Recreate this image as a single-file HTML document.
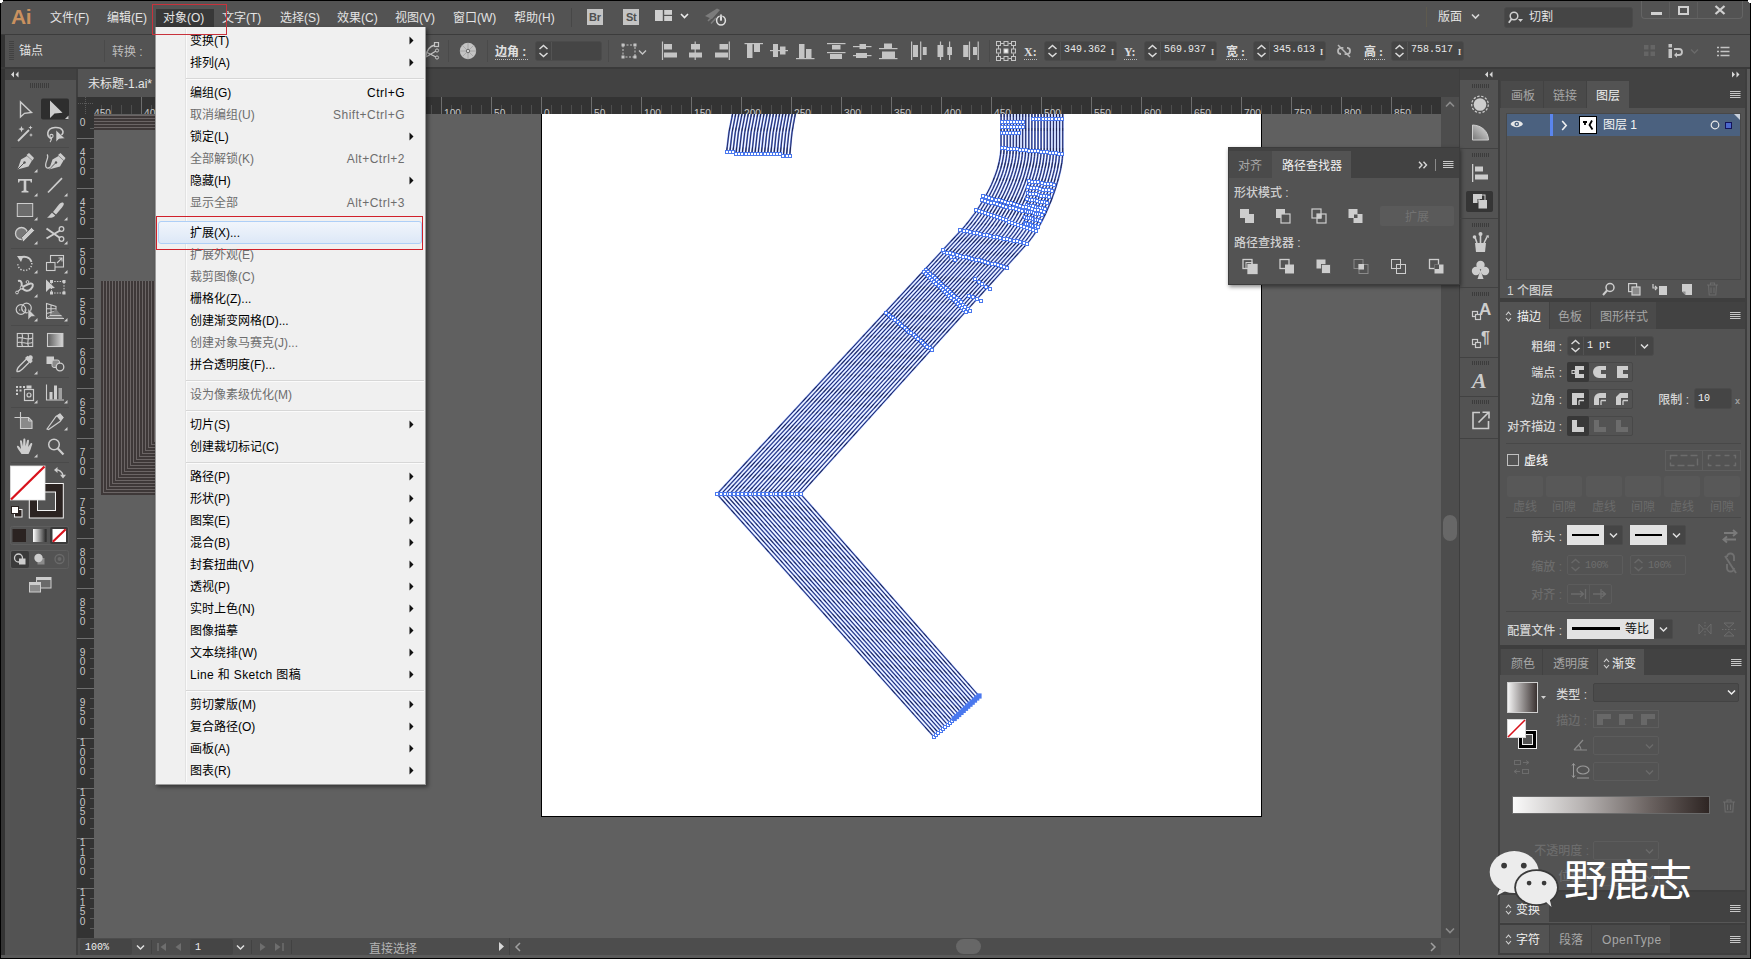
<!DOCTYPE html>
<html lang="zh-CN"><head><meta charset="utf-8"><title>Adobe Illustrator</title>
<style>
html,body{margin:0;padding:0;background:#2b2b2b;}
#root{position:relative;width:1751px;height:959px;overflow:hidden;font-family:"Liberation Sans","Noto Sans CJK SC",sans-serif;}
.a{position:absolute;}
.t{position:absolute;white-space:nowrap;line-height:1;}
.m{font-family:"Liberation Mono","Noto Sans CJK SC",monospace;}
</style></head>
<body><div id="root">
<!-- p_base -->
<div class="a" style="left:0px;top:0px;width:1751px;height:959px;background:#000;"></div>
<div class="a" style="left:1px;top:1px;width:1749px;height:957px;background:#535353;"></div>
<div class="a" style="left:0px;top:0px;width:3px;height:2px;background:#fff;"></div>
<div class="a" style="left:0px;top:0px;width:2px;height:3px;background:#fff;"></div>
<div class="a" style="left:1748px;top:0px;width:3px;height:2px;background:#fff;"></div>
<div class="a" style="left:1749px;top:0px;width:2px;height:3px;background:#fff;"></div>
<div class="a" style="left:1px;top:68px;width:1749px;height:887px;background:#3e3e3e;"></div>
<div class="a" style="left:1px;top:34px;width:4px;height:921px;background:#343434;"></div>
<div class="a" style="left:1747px;top:68px;width:3px;height:890px;background:#5a5a5a;"></div>
<div class="a" style="left:1px;top:955px;width:1749px;height:3px;background:#5a5a5a;"></div>
<div class="a" style="left:1px;top:34px;width:1749px;height:1px;background:#3c3c3c;"></div>
<div class="a" style="left:1px;top:67px;width:1749px;height:2px;background:#3a3a3a;"></div>
<div class="a" style="left:5px;top:69px;width:71px;height:886px;background:#535353;"></div>
<div class="a" style="left:5px;top:69px;width:71px;height:11px;background:#424242;"></div>
<div class="a" style="left:78px;top:69px;width:1381px;height:28px;background:#424242;"></div>
<div class="a" style="left:78px;top:69px;width:120px;height:28px;background:#535353;"></div>
<div class="t" style="left:88px;top:78px;color:#e6e6e6;font-size:12px;">未标题-1.ai*</div>
<div class="a" style="left:78px;top:97px;width:1381px;height:858px;background:#606060;"></div>
<div class="a" style="left:1441px;top:97px;width:18px;height:841px;background:#4d4d4d;"></div>
<div class="a" style="left:78px;top:938px;width:1381px;height:17px;background:#4d4d4d;"></div>
<div class="a" style="left:541px;top:113px;width:721px;height:704px;background:#fff;border:1px solid #000;box-sizing:border-box;border-top:none;"></div>
<div class="a" style="left:1460px;top:69px;width:38px;height:886px;background:#535353;"></div>
<div class="a" style="left:1460px;top:69px;width:285px;height:11px;background:#424242;"></div>
<div class="a" style="left:1500px;top:69px;width:245px;height:886px;background:#535353;"></div>
<div class="a" style="left:1500px;top:69px;width:245px;height:11px;background:#424242;"></div>
<!-- p_menubar -->
<div class="t" style="left:11px;top:6px;color:#c9915f;font-size:21px;font-weight:bold;letter-spacing:-0.5px;">Ai</div>
<div class="a" style="left:156px;top:9px;width:58px;height:18px;background:#383838;"></div>
<div class="t" style="left:50px;top:12px;color:#e4e4e4;font-size:12px;">文件(F)</div>
<div class="t" style="left:107px;top:12px;color:#e4e4e4;font-size:12px;">编辑(E)</div>
<div class="t" style="left:163px;top:12px;color:#e4e4e4;font-size:12px;">对象(O)</div>
<div class="t" style="left:222px;top:12px;color:#e4e4e4;font-size:12px;">文字(T)</div>
<div class="t" style="left:280px;top:12px;color:#e4e4e4;font-size:12px;">选择(S)</div>
<div class="t" style="left:337px;top:12px;color:#e4e4e4;font-size:12px;">效果(C)</div>
<div class="t" style="left:395px;top:12px;color:#e4e4e4;font-size:12px;">视图(V)</div>
<div class="t" style="left:453px;top:12px;color:#e4e4e4;font-size:12px;">窗口(W)</div>
<div class="t" style="left:514px;top:12px;color:#e4e4e4;font-size:12px;">帮助(H)</div>
<div class="a" style="left:571px;top:8px;width:1px;height:19px;background:#474747;"></div>
<div class="a" style="left:587px;top:9px;width:16px;height:16px;background:#c4c4c4;"></div>
<div class="t" style="left:589px;top:12px;color:#505050;font-size:11px;font-weight:bold;letter-spacing:-0.3px;">Br</div>
<div class="a" style="left:623px;top:9px;width:16px;height:16px;background:#c4c4c4;"></div>
<div class="t" style="left:626px;top:12px;color:#505050;font-size:11px;font-weight:bold;letter-spacing:-0.3px;">St</div>
<svg class="a" style="left:655px;top:10px;" width="18" height="12" viewBox="0 0 18 12"><rect x="0" y="0" width="7.8" height="11" fill="#cfcfcf"/><rect x="9.2" y="0" width="7.8" height="4.8" fill="#cfcfcf"/><rect x="9.2" y="6" width="7.8" height="5" fill="#cfcfcf"/></svg>
<svg class="a" style="left:680px;top:13px;" width="9" height="7" viewBox="0 0 9 7"><path d="M1 1 L4.5 4.5 L8 1" stroke="#ececec" stroke-width="1.6" fill="none"/></svg>
<svg class="a" style="left:704px;top:7px;" width="24" height="22" viewBox="0 0 24 22"><path d="M1 9 L13 1.5 L16 3 L8 12 Z" fill="#7c7c7c"/><path d="M4 14 L10 8 M7 16.5 L12 11" stroke="#7c7c7c" stroke-width="1.6"/><circle cx="17" cy="13.5" r="4.4" fill="#535353" stroke="#e0e0e0" stroke-width="1.5"/><path d="M17 7.5 V13.5" stroke="#e0e0e0" stroke-width="1.7"/><path d="M15.6 8.5 H18.4" stroke="#535353" stroke-width="2.6"/><path d="M17 7.5 V13.5" stroke="#e0e0e0" stroke-width="1.7"/></svg>
<div class="a" style="left:1426px;top:7px;width:1px;height:20px;background:#5e5a4e;"></div>
<div class="t" style="left:1438px;top:11px;color:#e4e4e4;font-size:12px;">版面</div>
<svg class="a" style="left:1471px;top:13px;" width="9" height="7" viewBox="0 0 9 7"><path d="M1 1.5 L4.5 5 L8 1.5" stroke="#d8d8d8" stroke-width="1.6" fill="none"/></svg>
<div class="a" style="left:1504px;top:7px;width:129px;height:21px;background:#454545;border-radius:3px;border:1px solid #4a4a4a;box-sizing:border-box;"></div>
<svg class="a" style="left:1508px;top:10px;" width="16" height="15" viewBox="0 0 16 15"><circle cx="6" cy="6" r="3.8" fill="none" stroke="#d0d0d0" stroke-width="1.5"/><path d="M3.6 9 L0.8 12.8" stroke="#d0d0d0" stroke-width="1.8"/><path d="M10 9 L12.5 12 L15 9 Z" fill="#d0d0d0"/></svg>
<div class="t" style="left:1529px;top:11px;color:#e4e4e4;font-size:12px;">切割</div>
<div class="a" style="left:1641px;top:1px;width:102px;height:18px;background:#535353;border:1px solid #646464;border-top:none;border-radius:0 0 4px 4px;box-sizing:border-box;"></div>
<div class="a" style="left:1651px;top:12px;width:11px;height:3px;background:#d0d0d0;"></div>
<div class="a" style="left:1678px;top:6px;width:11px;height:9px;border:2px solid #d0d0d0;box-sizing:border-box;"></div>
<div class="a" style="left:1669px;top:2px;width:1px;height:16px;background:#5e5e5e;"></div>
<div class="a" style="left:1697px;top:2px;width:1px;height:16px;background:#5e5e5e;"></div>
<svg class="a" style="left:1714px;top:5px;" width="12" height="10" viewBox="0 0 12 10"><path d="M1.5 1 L10.5 9 M10.5 1 L1.5 9" stroke="#d0d0d0" stroke-width="2.3"/></svg>
<!-- p_control -->
<div class="a" style="left:9px;top:41px;width:5px;height:20px;background:repeating-linear-gradient(#424242 0 1px,transparent 1px 2px);"></div>
<div class="t" style="left:19px;top:45px;color:#e2e2e2;font-size:12px;">锚点</div>
<div class="a" style="left:104px;top:40px;width:1px;height:22px;background:#4a4a4a;"></div>
<div class="t" style="left:112px;top:46px;color:#bdbdbd;font-size:12px;">转换 :</div>
<svg class="a" style="left:424px;top:42px;" width="16" height="18" viewBox="0 0 16 18"><path d="M2 14 C3 7 6 4 11 3" stroke="#c4c4c4" stroke-width="1.3" fill="none"/><rect x="10.5" y="0.5" width="4" height="4" fill="none" stroke="#c4c4c4" stroke-width="1.2"/><path d="M2 10 L12 15 M2 15 L12 9" stroke="#c4c4c4" stroke-width="1.3"/><circle cx="13" cy="15.5" r="1.6" fill="none" stroke="#c4c4c4" stroke-width="1"/><circle cx="13" cy="8.5" r="1.6" fill="none" stroke="#c4c4c4" stroke-width="1"/></svg>
<div class="a" style="left:448px;top:40px;width:1px;height:22px;background:#4a4a4a;"></div>
<svg class="a" style="left:459px;top:42px;" width="18" height="18" viewBox="0 0 18 18"><circle cx="9" cy="9" r="8.2" fill="#c4c4c4"/><circle cx="9" cy="9" r="2.2" fill="#535353"/><path d="M9 1 V17 M1 9 H17 M3.3 3.3 L14.7 14.7 M14.7 3.3 L3.3 14.7" stroke="#a0a0a0" stroke-width="0.8"/><circle cx="9" cy="9" r="1" fill="#e8e8e8"/></svg>
<div class="a" style="left:487px;top:40px;width:1px;height:22px;background:#4a4a4a;"></div>
<div class="t" style="left:495px;top:46px;color:#e0e0e0;font-size:12px;font-weight:bold;">边角 :</div>
<div class="a" style="left:495px;top:59px;width:33px;height:1px;border-top:1px dotted #bdbdbd;"></div>
<div class="a" style="left:535px;top:41px;width:67px;height:20px;background:#454545;border-radius:3px;border:1px solid #4b4b4b;box-sizing:border-box;"></div>
<div class="a" style="left:551px;top:42px;width:1px;height:18px;background:#535353;"></div>
<svg class="a" style="left:538px;top:44px;" width="11" height="14" viewBox="0 0 11 14"><path d="M1.5 5 L5.5 1.5 L9.5 5 M1.5 9 L5.5 12.5 L9.5 9" stroke="#dcdcdc" stroke-width="1.5" fill="none"/></svg>
<div class="a" style="left:608px;top:40px;width:1px;height:22px;background:#4a4a4a;"></div>
<svg class="a" style="left:621px;top:43px;" width="26" height="16" viewBox="0 0 26 16"><rect x="2" y="2" width="12" height="12" fill="none" stroke="#c4c4c4" stroke-width="1" stroke-dasharray="2 1.5"/><rect x="0.5" y="0.5" width="3" height="3" fill="#c4c4c4"/><rect x="12.5" y="0.5" width="3" height="3" fill="#c4c4c4"/><rect x="0.5" y="12.5" width="3" height="3" fill="#c4c4c4"/><rect x="12.5" y="12.5" width="3" height="3" fill="#c4c4c4"/><path d="M18 7.5 L21.5 11 L25 7.5" stroke="#c4c4c4" stroke-width="1.4" fill="none"/></svg>
<svg class="a" style="left:0;top:0" width="1000" height="68" viewBox="0 0 1000 68"><rect x="661.9" y="41.5" width="1.2" height="18.5" fill="#c4c4c4"/><rect x="664" y="44" width="8" height="5.5" fill="#c4c4c4"/><rect x="664" y="52.5" width="13" height="5.0" fill="#c4c4c4"/><rect x="694.6" y="41.5" width="1.2" height="18.5" fill="#c4c4c4"/><rect x="691" y="44" width="9" height="5.5" fill="#c4c4c4"/><rect x="689" y="52.5" width="13" height="5.0" fill="#c4c4c4"/><rect x="728.7" y="41.5" width="1.2" height="18.5" fill="#c4c4c4"/><rect x="719.5" y="44" width="8.5" height="5.5" fill="#c4c4c4"/><rect x="715" y="52.5" width="13" height="5.0" fill="#c4c4c4"/><rect x="744.5" y="43.0" width="18.5" height="1.2" fill="#c4c4c4"/><rect x="747" y="44" width="5.5" height="14" fill="#c4c4c4"/><rect x="754" y="44" width="6" height="8" fill="#c4c4c4"/><rect x="770" y="50.0" width="18" height="1.2" fill="#c4c4c4"/><rect x="773" y="44" width="5" height="13" fill="#c4c4c4"/><rect x="780" y="46.5" width="5.5" height="8.0" fill="#c4c4c4"/><rect x="796" y="58.0" width="18.5" height="1.2" fill="#c4c4c4"/><rect x="799" y="44" width="5.5" height="14" fill="#c4c4c4"/><rect x="806" y="49" width="5.5" height="9" fill="#c4c4c4"/><rect x="827" y="43.0" width="18.5" height="1.2" fill="#c4c4c4"/><rect x="827" y="52.0" width="18.5" height="1.2" fill="#c4c4c4"/><rect x="832" y="45" width="8.5" height="4.5" fill="#c4c4c4"/><rect x="830" y="54" width="12" height="5" fill="#c4c4c4"/><rect x="853" y="46.0" width="18.5" height="1.2" fill="#c4c4c4"/><rect x="853" y="55.0" width="18.5" height="1.2" fill="#c4c4c4"/><rect x="859.5" y="44" width="6.5" height="5" fill="#c4c4c4"/><rect x="856" y="53" width="11" height="5" fill="#c4c4c4"/><rect x="879" y="48.0" width="18.5" height="1.2" fill="#c4c4c4"/><rect x="879" y="58.0" width="18.5" height="1.2" fill="#c4c4c4"/><rect x="884" y="43.5" width="8" height="4.5" fill="#c4c4c4"/><rect x="882" y="51.5" width="13" height="6.5" fill="#c4c4c4"/><rect x="911.0" y="41.5" width="1.2" height="18.5" fill="#c4c4c4"/><rect x="920.1" y="41.5" width="1.2" height="18.5" fill="#c4c4c4"/><rect x="913" y="45" width="5" height="12" fill="#c4c4c4"/><rect x="922.8" y="47" width="3.900000000000091" height="8" fill="#c4c4c4"/><rect x="939.9" y="41.5" width="1.2" height="18.5" fill="#c4c4c4"/><rect x="949.0" y="41.5" width="1.2" height="18.5" fill="#c4c4c4"/><rect x="937.5" y="45" width="5.7999999999999545" height="12" fill="#c4c4c4"/><rect x="947.3" y="47" width="4.7000000000000455" height="8" fill="#c4c4c4"/><rect x="968.9" y="41.5" width="1.2" height="18.5" fill="#c4c4c4"/><rect x="977.6" y="41.5" width="1.2" height="18.5" fill="#c4c4c4"/><rect x="963.2" y="45" width="5.199999999999932" height="12" fill="#c4c4c4"/><rect x="973" y="47" width="4" height="8" fill="#c4c4c4"/></svg>
<div class="a" style="left:989px;top:40px;width:1px;height:22px;background:#4a4a4a;"></div>
<svg class="a" style="left:996px;top:41px;" width="20" height="20" viewBox="0 0 20 20"><rect x="0.5" y="0.5" width="4" height="4" fill="none" stroke="#c4c4c4" stroke-width="1"/><rect x="8.0" y="0.5" width="4" height="4" fill="none" stroke="#c4c4c4" stroke-width="1"/><rect x="15.5" y="0.5" width="4" height="4" fill="none" stroke="#c4c4c4" stroke-width="1"/><rect x="0.5" y="8.0" width="4" height="4" fill="none" stroke="#c4c4c4" stroke-width="1"/><rect x="8.0" y="8.0" width="4" height="4" fill="#f4f4f4" stroke="#c4c4c4" stroke-width="1"/><rect x="15.5" y="8.0" width="4" height="4" fill="none" stroke="#c4c4c4" stroke-width="1"/><rect x="0.5" y="15.5" width="4" height="4" fill="none" stroke="#c4c4c4" stroke-width="1"/><rect x="8.0" y="15.5" width="4" height="4" fill="none" stroke="#c4c4c4" stroke-width="1"/><rect x="15.5" y="15.5" width="4" height="4" fill="none" stroke="#c4c4c4" stroke-width="1"/><path d="M5 2.5 H8 M12.5 2.5 H15.5 M5 17.5 H8 M12.5 17.5 H15.5 M2.5 5 V8 M2.5 12.5 V15.5 M17.5 5 V8 M17.5 12.5 V15.5" stroke="#c4c4c4" stroke-width="1"/></svg>
<div class="t" style="left:1024px;top:46px;color:#dedede;font-size:12px;font-family:'Liberation Serif','Noto Sans CJK SC',serif;font-weight:bold;">X:</div>
<div class="a" style="left:1024px;top:59px;width:13px;height:1px;border-top:1px dotted #bdbdbd;"></div>
<div class="a" style="left:1044px;top:41px;width:73px;height:20px;background:#454545;border-radius:3px;border:1px solid #4b4b4b;box-sizing:border-box;"></div>
<div class="a" style="left:1060px;top:42px;width:1px;height:18px;background:#535353;"></div>
<svg class="a" style="left:1047px;top:44px;" width="11" height="14" viewBox="0 0 11 14"><path d="M1.5 5 L5.5 1.5 L9.5 5 M1.5 9 L5.5 12.5 L9.5 9" stroke="#dcdcdc" stroke-width="1.5" fill="none"/></svg>
<div class="t" style="left:1064px;top:45px;color:#e8e8e8;font-size:10px;font-family:'Liberation Mono',monospace;">349.362</div>
<div class="t" style="left:1111px;top:49px;color:#e0e0e0;font-size:8px;font-family:'Liberation Serif',serif;font-weight:bold;">I</div>
<div class="t" style="left:1124px;top:46px;color:#dedede;font-size:12px;font-family:'Liberation Serif','Noto Sans CJK SC',serif;font-weight:bold;">Y:</div>
<div class="a" style="left:1124px;top:59px;width:13px;height:1px;border-top:1px dotted #bdbdbd;"></div>
<div class="a" style="left:1144px;top:41px;width:73px;height:20px;background:#454545;border-radius:3px;border:1px solid #4b4b4b;box-sizing:border-box;"></div>
<div class="a" style="left:1160px;top:42px;width:1px;height:18px;background:#535353;"></div>
<svg class="a" style="left:1147px;top:44px;" width="11" height="14" viewBox="0 0 11 14"><path d="M1.5 5 L5.5 1.5 L9.5 5 M1.5 9 L5.5 12.5 L9.5 9" stroke="#dcdcdc" stroke-width="1.5" fill="none"/></svg>
<div class="t" style="left:1164px;top:45px;color:#e8e8e8;font-size:10px;font-family:'Liberation Mono',monospace;">569.937</div>
<div class="t" style="left:1211px;top:49px;color:#e0e0e0;font-size:8px;font-family:'Liberation Serif',serif;font-weight:bold;">I</div>
<div class="t" style="left:1226px;top:46px;color:#dedede;font-size:12px;font-family:'Liberation Serif','Noto Sans CJK SC',serif;font-weight:bold;">宽 :</div>
<div class="a" style="left:1226px;top:59px;width:21px;height:1px;border-top:1px dotted #bdbdbd;"></div>
<div class="a" style="left:1253px;top:41px;width:73px;height:20px;background:#454545;border-radius:3px;border:1px solid #4b4b4b;box-sizing:border-box;"></div>
<div class="a" style="left:1269px;top:42px;width:1px;height:18px;background:#535353;"></div>
<svg class="a" style="left:1256px;top:44px;" width="11" height="14" viewBox="0 0 11 14"><path d="M1.5 5 L5.5 1.5 L9.5 5 M1.5 9 L5.5 12.5 L9.5 9" stroke="#dcdcdc" stroke-width="1.5" fill="none"/></svg>
<div class="t" style="left:1273px;top:45px;color:#e8e8e8;font-size:10px;font-family:'Liberation Mono',monospace;">345.613</div>
<div class="t" style="left:1320px;top:49px;color:#e0e0e0;font-size:8px;font-family:'Liberation Serif',serif;font-weight:bold;">I</div>
<svg class="a" style="left:1335px;top:42px;" width="18" height="18" viewBox="0 0 18 18"><path d="M3 9 a3.2 3.2 0 0 1 3.2 -3.2 h2.2 M15 9 a3.2 3.2 0 0 1 -3.2 3.2 h-2.2 M6 12 h-0.5 a3 3 0 0 1 -2.5 -3 M12 5.8 h0.5 a3 3 0 0 1 2.5 3.2" stroke="#b8b8b8" stroke-width="1.8" fill="none"/><path d="M3 3 L15 15" stroke="#b8b8b8" stroke-width="1.5"/></svg>
<div class="t" style="left:1364px;top:46px;color:#dedede;font-size:12px;font-family:'Liberation Serif','Noto Sans CJK SC',serif;font-weight:bold;">高 :</div>
<div class="a" style="left:1364px;top:59px;width:21px;height:1px;border-top:1px dotted #bdbdbd;"></div>
<div class="a" style="left:1391px;top:41px;width:73px;height:20px;background:#454545;border-radius:3px;border:1px solid #4b4b4b;box-sizing:border-box;"></div>
<div class="a" style="left:1407px;top:42px;width:1px;height:18px;background:#535353;"></div>
<svg class="a" style="left:1394px;top:44px;" width="11" height="14" viewBox="0 0 11 14"><path d="M1.5 5 L5.5 1.5 L9.5 5 M1.5 9 L5.5 12.5 L9.5 9" stroke="#dcdcdc" stroke-width="1.5" fill="none"/></svg>
<div class="t" style="left:1411px;top:45px;color:#e8e8e8;font-size:10px;font-family:'Liberation Mono',monospace;">758.517</div>
<div class="t" style="left:1458px;top:49px;color:#e0e0e0;font-size:8px;font-family:'Liberation Serif',serif;font-weight:bold;">I</div>
<svg class="a" style="left:1643px;top:44px;" width="13" height="13" viewBox="0 0 13 13"><rect x="1" y="1" width="4.5" height="4.5" fill="#656565"/><rect x="7.5" y="1" width="4.5" height="4.5" fill="#656565"/><rect x="1" y="7.5" width="4.5" height="4.5" fill="#656565"/><rect x="7.5" y="7.5" width="4.5" height="4.5" fill="#656565"/></svg>
<svg class="a" style="left:1668px;top:44px;" width="16" height="14" viewBox="0 0 16 14"><rect x="0.5" y="0" width="3.5" height="3.5" fill="#c4c4c4"/><rect x="0.5" y="5" width="3.5" height="9" fill="#c4c4c4"/><path d="M6 5 H11 a3 3 0 0 1 0 6 H8" stroke="#c4c4c4" stroke-width="1.8" fill="none"/><path d="M9 8.2 L6 11 L9 13.8 Z" fill="#c4c4c4"/></svg>
<svg class="a" style="left:1690px;top:48px;" width="9" height="7" viewBox="0 0 9 7"><path d="M1 1.5 L4.5 5 L8 1.5" stroke="#6a6a6a" stroke-width="1.4" fill="none"/></svg>
<svg class="a" style="left:1717px;top:46px;" width="13" height="11" viewBox="0 0 13 11"><path d="M3.5 1.5 H12.5 M3.5 5.5 H12.5 M3.5 9.5 H12.5" stroke="#c4c4c4" stroke-width="1.5"/><path d="M0 1.5 H2 M0 5.5 H2 M0 9.5 H2" stroke="#c4c4c4" stroke-width="1.5"/></svg>
<!-- p_tools -->
<svg class="a" style="left:10px;top:71px;" width="10" height="7" viewBox="0 0 10 7"><path d="M4 0.5 L1 3.5 L4 6.5 Z M8.5 0.5 L5.5 3.5 L8.5 6.5 Z" fill="#d8d8d8"/></svg>
<div class="a" style="left:30px;top:83px;width:20px;height:5px;background:repeating-linear-gradient(90deg,#3c3c3c 0 1px,transparent 1px 2px);"></div>
<svg class="a" style="left:0;top:0" width="77" height="600" viewBox="0 0 77 600"><path d="M20.5 102 V117 L24.5 113.3 L31.5 112.5 Z" fill="none" stroke="#cdcdcd" stroke-width="1.4" stroke-linejoin="miter"/><rect x="41" y="98.5" width="28" height="21" rx="2" fill="#2e2e2e"/><path d="M50 100.5 V118 L54.5 113.5 L62.5 112.8 Z" fill="#cdcdcd"/><path d="M68.5 115.5 V119.0 H65 Z" fill="#cdcdcd"/><path d="M18 141 L29 130" stroke="#cdcdcd" stroke-width="1.8"/><path d="M21.5 126 l0.9 2.2 2.2 0.9 -2.2 0.9 -0.9 2.2 -0.9 -2.2 -2.2 -0.9 2.2 -0.9z M30.5 125.5 l0.6 1.5 1.5 0.6 -1.5 0.6 -0.6 1.5 -0.6 -1.5 -1.5 -0.6 1.5 -0.6z M31 133 l0.6 1.4 1.4 0.6 -1.4 0.6 -0.6 1.4 -0.6 -1.4 -1.4 -0.6 1.4 -0.6z" fill="#cdcdcd"/><path d="M52 139 C46 137 46 128 55 127.5 C63 127 65 133 61 135" stroke="#cdcdcd" stroke-width="1.6" fill="none"/><circle cx="51.5" cy="136" r="1.6" fill="none" stroke="#cdcdcd" stroke-width="1.1"/><path d="M51 138 C52 140 51 141 50 142" stroke="#cdcdcd" stroke-width="1.1" fill="none"/><path d="M56 130 V142 L59 139 L65 138.5 Z" fill="#cdcdcd" stroke="#535353" stroke-width="0.6"/><path d="M17.5 169.5 L21 159.5 L27 156 L32 160.5 L28.5 166.5 Z" fill="#cdcdcd"/><path d="M26.5 155 L29 153 L34 158 L32.5 160.5 Z" fill="#cdcdcd"/><path d="M17.5 169.5 L24 163" stroke="#535353" stroke-width="1"/><circle cx="24.5" cy="162.5" r="1.2" fill="#535353"/><path d="M37.5 169 V172.5 H34 Z" fill="#cdcdcd"/><path d="M49 169.5 L52.5 159.5 L58.5 156 L63.5 160.5 L60 166.5 Z" fill="#cdcdcd"/><path d="M58 155 L60.5 153 L65.5 158 L64 160.5 Z" fill="#cdcdcd"/><path d="M49 169.5 L55.5 163" stroke="#535353" stroke-width="1"/><circle cx="56" cy="162.5" r="1.2" fill="#535353"/><path d="M47 154.5 C50 157 44 163 46 167 C47 169 50 168 51 166" stroke="#cdcdcd" stroke-width="1.3" fill="none"/><path d="M18 179 H32 V182.5 H30.8 L30.2 180.8 H26.3 V190.6 L28.5 191.2 V192.6 H21.5 V191.2 L23.7 190.6 V180.8 H19.8 L19.2 182.5 H18 Z" fill="#cdcdcd"/><path d="M37.5 193 V196.5 H34 Z" fill="#cdcdcd"/><path d="M48 192.5 L62 178.2" stroke="#cdcdcd" stroke-width="1.7"/><path d="M67.5 193 V196.5 H64 Z" fill="#cdcdcd"/><rect x="17.3" y="203.5" width="15.4" height="13" fill="#6c6c6c" stroke="#cdcdcd" stroke-width="1"/><path d="M37.5 217 V220.5 H34 Z" fill="#cdcdcd"/><path d="M63.5 203 C62 202 60 203 58.5 205 L53 212 L56 214.5 L62 207.5 C63.5 205.5 64.3 204 63.5 203 Z" fill="#cdcdcd"/><path d="M52 212.8 L55.2 215.5 C54 217.5 50 218.3 47 217.5 C49.5 216.5 50 214.5 52 212.8 Z" fill="#cdcdcd"/><path d="M67.5 217 V220.5 H64 Z" fill="#cdcdcd"/><circle cx="21.5" cy="233.5" r="6" fill="#787878" stroke="#cdcdcd" stroke-width="1.3"/><path d="M23 242 L21.5 237.5 L31.5 227.5 L34.5 230.5 L24.5 240.5 Z" fill="#cdcdcd" stroke="#535353" stroke-width="0.7"/><path d="M37.5 241 V244.5 H34 Z" fill="#cdcdcd"/><path d="M46.5 228.5 L60 238 M46.5 238.5 L60 230.5" stroke="#cdcdcd" stroke-width="2"/><circle cx="61.5" cy="229" r="2.3" fill="none" stroke="#cdcdcd" stroke-width="1.3"/><circle cx="61.5" cy="239" r="2.3" fill="none" stroke="#cdcdcd" stroke-width="1.3"/><path d="M67.5 241 V244.5 H64 Z" fill="#cdcdcd"/><path d="M20 258 C24 255.5 30 257 31.5 262" stroke="#cdcdcd" stroke-width="1.8" fill="none"/><path d="M17 256 L23.5 256 L21 262 Z" fill="#cdcdcd"/><path d="M31.8 263 C32 269 26 272 21 269.5 C18.5 268 17.5 265.5 18 263" stroke="#cdcdcd" stroke-width="1.5" fill="none" stroke-dasharray="1.3 1.6"/><path d="M37.5 270 V273.5 H34 Z" fill="#cdcdcd"/><rect x="50.5" y="255.5" width="13" height="11.5" fill="none" stroke="#cdcdcd" stroke-width="1.1"/><rect x="46.5" y="262.5" width="8.5" height="8" fill="#535353" stroke="#cdcdcd" stroke-width="1.1"/><path d="M57 263 L61.5 258.5 M58.5 258 H62 V261.5" stroke="#cdcdcd" stroke-width="1.1" fill="none"/><path d="M67.5 270 V273.5 H64 Z" fill="#cdcdcd"/><path d="M17 292.5 L22 287.5" stroke="#cdcdcd" stroke-width="1.2"/><circle cx="17" cy="292.5" r="1.4" fill="#535353" stroke="#cdcdcd" stroke-width="1"/><circle cx="22" cy="287.5" r="1.7" fill="#535353" stroke="#cdcdcd" stroke-width="1"/><circle cx="27.5" cy="282" r="1.4" fill="#535353" stroke="#cdcdcd" stroke-width="1"/><path d="M18 281 C22 280 22 284 21.5 286 M22 288 C25 291 28 292 31 289 C34 286 33 283 30.5 283.5 C27 284.5 25 286 22.5 287" stroke="#cdcdcd" stroke-width="2" fill="none"/><path d="M37.5 294 V297.5 H34 Z" fill="#cdcdcd"/><rect x="51.5" y="281.5" width="12.5" height="11.5" fill="none" stroke="#cdcdcd" stroke-width="1" stroke-dasharray="1.5 1.2"/><rect x="50" y="280" width="3" height="3" fill="#cdcdcd"/><rect x="62.5" y="280" width="3" height="3" fill="#cdcdcd"/><rect x="50" y="291.5" width="3" height="3" fill="#cdcdcd"/><rect x="62.5" y="291.5" width="3" height="3" fill="#cdcdcd"/><path d="M46 279.5 V292 L49.5 288.5 L55 288 Z" fill="#cdcdcd"/><circle cx="21" cy="309.5" r="4.8" fill="none" stroke="#cdcdcd" stroke-width="1.2"/><circle cx="26.5" cy="308" r="4.8" fill="none" stroke="#cdcdcd" stroke-width="1.2"/><path d="M19 310 H27" stroke="#cdcdcd" stroke-width="1.2" stroke-dasharray="1.2 1.4"/><path d="M28 308.5 V320 L31 316.8 L35.5 316.2 Z" fill="#cdcdcd" stroke="#535353" stroke-width="0.6"/><path d="M37.5 318 V321.5 H34 Z" fill="#cdcdcd"/><path d="M46.5 303.5 V318.5 L56 311.5 V306.5 Z M51 305 V315 M46.5 308.5 L56 308.8 M46.5 313.5 L56 311" stroke="#cdcdcd" stroke-width="1.1" fill="none"/><path d="M56 309 L64 318.5 H47 Z" fill="#7a7a7a"/><path d="M47 318.5 H64 M50 315.5 H61.5" stroke="#cdcdcd" stroke-width="1"/><path d="M67.5 318 V321.5 H64 Z" fill="#cdcdcd"/><rect x="17.3" y="333.5" width="15.4" height="13" fill="none" stroke="#cdcdcd" stroke-width="1.1"/><path d="M17.5 338 C22 336 27 341 32.5 338 M17.5 342.5 C22 341 27 345 32.5 342.5 M22 333.5 C24 338 20 342 22.5 346.5 M28 333.5 C30 338 26 342 28.5 346.5" stroke="#cdcdcd" stroke-width="1.1" fill="none"/><defs><linearGradient id="tg1" x1="0" x2="1" y1="0" y2="0"><stop offset="0" stop-color="#5a5a5a"/><stop offset="1" stop-color="#d8d8d8"/></linearGradient></defs><rect x="47.5" y="333.5" width="15.4" height="13" fill="url(#tg1)" stroke="#cdcdcd" stroke-width="1.1"/><path d="M17 371.5 C16.5 369 18 367.5 19.5 366 L26.5 359 L29.5 362 L22.5 369 C21 370.5 19.5 372 17 371.5 Z" fill="none" stroke="#cdcdcd" stroke-width="1.3"/><path d="M25 358 L27.5 355.8 L32.8 361 L30.5 363.5 Z M28 357 C29 355 31 354.8 32 355.8 C33.2 357 33 359 31.5 360.5 Z" fill="#cdcdcd"/><path d="M37.5 371 V374.5 H34 Z" fill="#cdcdcd"/><rect x="46.5" y="356.5" width="7.5" height="7.5" fill="#cdcdcd"/><rect x="52" y="360" width="7.5" height="7.5" rx="2" fill="#8a8a8a" stroke="#cdcdcd" stroke-width="1"/><circle cx="60" cy="367" r="3.8" fill="#535353" stroke="#cdcdcd" stroke-width="1.3"/><rect x="24.5" y="389.5" width="9" height="11" fill="none" stroke="#cdcdcd" stroke-width="1.2"/><rect x="26.5" y="385.5" width="5" height="3" fill="#cdcdcd"/><circle cx="29" cy="395" r="2" fill="none" stroke="#cdcdcd" stroke-width="1.2"/><path d="M16 386 h2 v2 h-2z M19.5 386 h2 v2 h-2z M23 386 h2 v2 h-2z M16 389.5 h2 v2 h-2z M19.5 389.5 h2 v2 h-2z M16 393 h2 v2 h-2z" fill="#cdcdcd"/><path d="M37.5 400 V403.5 H34 Z" fill="#cdcdcd"/><path d="M46.5 384.5 V400 H64" stroke="#cdcdcd" stroke-width="1.1" fill="none"/><rect x="49.5" y="392" width="3" height="7.5" fill="#cdcdcd"/><rect x="54" y="385.5" width="3" height="14" fill="#cdcdcd"/><rect x="58.5" y="388" width="3.5" height="11.5" fill="#a0a0a0"/><path d="M67.5 400 V403.5 H64 Z" fill="#cdcdcd"/><path d="M20.5 412 V419 M14.5 417.5 H21" stroke="#cdcdcd" stroke-width="1.1"/><path d="M20.5 417.5 H28.5 L32 421 V428.5 H20.5 Z" fill="#8a8a8a" stroke="#cdcdcd" stroke-width="1.1"/><path d="M28.5 417.5 V421 H32" stroke="#cdcdcd" stroke-width="1" fill="none"/><path d="M47 429 L56 416.5 L60 414 L63 417.5 L60 421.5 L48.5 429.5 Z" fill="none" stroke="#cdcdcd" stroke-width="1.2"/><path d="M56.5 416 L60 413.5 L63.5 417.5 L60.5 421 Z" fill="#cdcdcd"/><path d="M67.5 427 V430.5 H64 Z" fill="#cdcdcd"/><path d="M21.5 454 C19.5 451 17.5 448.5 17 447 C16.7 445.8 18.2 445.3 19 446.5 L21 449 L20 441.5 C19.8 440 21.7 439.7 22 441.2 L23 446.5 L23.3 439.7 C23.4 438.2 25.4 438.2 25.4 439.7 L25.6 446.3 L27 440.5 C27.3 439.2 29.2 439.6 29 441 L28.2 447 L30.5 443.5 C31.3 442.4 32.8 443.3 32.2 444.6 C31 447.5 30.5 451 28.5 454 Z" fill="#cdcdcd"/><path d="M37.5 454 V457.5 H34 Z" fill="#cdcdcd"/><circle cx="54" cy="444.5" r="5.3" fill="none" stroke="#cdcdcd" stroke-width="1.5"/><path d="M57.8 448.5 L63.5 454.5" stroke="#cdcdcd" stroke-width="2.2"/><rect x="11" y="147" width="58" height="1" fill="#4a4a4a"/><rect x="11" y="248" width="58" height="1" fill="#4a4a4a"/><rect x="11" y="325" width="58" height="1" fill="#4a4a4a"/><rect x="11" y="377" width="58" height="1" fill="#4a4a4a"/><rect x="11" y="407" width="58" height="1" fill="#4a4a4a"/><rect x="11" y="462" width="58" height="1" fill="#4a4a4a"/><rect x="29.3" y="483.5" width="34" height="34.5" fill="#2b2321" stroke="#f4f4f4" stroke-width="1"/><rect x="37.5" y="492" width="18" height="18.5" fill="#535353" stroke="#f4f4f4" stroke-width="1"/><rect x="10.5" y="466" width="34.5" height="34" fill="#fff" stroke="#e4e4e4" stroke-width="0.8"/><path d="M11 499.5 L44.5 466.5" stroke="#d8121c" stroke-width="2.3"/><path d="M55 470 C59 469.5 62.5 471.5 63 476" stroke="#cdcdcd" stroke-width="1.3" fill="none"/><path d="M54 470 L57.5 467 V473 Z M63 478.5 L60 474.8 H66 Z" fill="#cdcdcd"/><rect x="14.5" y="509.5" width="7.5" height="7.5" fill="#2b2321" stroke="#f0f0f0" stroke-width="1"/><rect x="11.5" y="506.5" width="7" height="7" fill="#fff" stroke="#2b2321" stroke-width="1"/><rect x="10.5" y="526.5" width="58" height="18" rx="2" fill="none" stroke="#5e5e5e" stroke-width="1"/><rect x="50" y="527" width="18" height="17" rx="2" fill="#3a3a3a"/><rect x="12.5" y="529" width="13.5" height="13" fill="#2b2321"/><defs><linearGradient id="tg2" x1="0" x2="1"><stop offset="0" stop-color="#fff"/><stop offset="1" stop-color="#222"/></linearGradient></defs><rect x="33" y="529" width="13.5" height="13" fill="url(#tg2)"/><rect x="52.5" y="529" width="13.5" height="13" fill="#fff"/><path d="M52.8 541.7 L65.7 529.3" stroke="#d8121c" stroke-width="2.2"/><rect x="10.5" y="550.5" width="58" height="18" rx="2" fill="none" stroke="#5e5e5e" stroke-width="1"/><rect x="11" y="551" width="18" height="17" rx="2" fill="#3a3a3a"/><circle cx="18.5" cy="558" r="4" fill="none" stroke="#cdcdcd" stroke-width="1.3"/><rect x="19" y="558.5" width="6.5" height="6" fill="#cdcdcd"/><rect x="37.5" y="558" width="7" height="6.5" fill="#8a8a8a"/><circle cx="38.5" cy="558" r="4.2" fill="#cdcdcd"/><circle cx="59.5" cy="559" r="4.5" fill="none" stroke="#6a6a6a" stroke-width="1.3"/><circle cx="59.5" cy="559" r="2" fill="#6a6a6a"/><rect x="36.5" y="577.5" width="14.5" height="10.5" fill="#6a6a6a" stroke="#cdcdcd" stroke-width="1"/><rect x="36.5" y="577.5" width="14.5" height="2.5" fill="#cdcdcd"/><rect x="29.5" y="582.5" width="11" height="9.5" fill="#8a8a8a" stroke="#cdcdcd" stroke-width="1"/><rect x="29.5" y="582.5" width="11" height="2.5" fill="#cdcdcd"/></svg>
<!-- p_ruler -->
<div class="a" style="left:94px;top:115px;width:64px;height:15px;background:repeating-linear-gradient(180deg,#6b6565 0 1px,#3e3838 1px 3px);"></div>
<div class="a" style="left:101px;top:281px;width:57px;height:214px;background:repeating-linear-gradient(90deg,#3e3838 0 2px,#6b6565 2px 3px);"></div>
<div class="a" style="left:101px;top:281px;width:57px;height:214px;background:repeating-linear-gradient(0deg,#3e3838 0 2px,#6b6565 2px 3px);clip-path:polygon(0 100%,100% 100%,100% calc(100% - 57px));"></div>
<svg class="a" style="left:94px;top:97px" width="1347" height="17" viewBox="94 0 1347 17"><rect x="78" y="0" width="1363" height="17" fill="#333"/><rect x="91" y="0" width="1" height="17" fill="#6e6e6e"/><rect x="101" y="8" width="1" height="9" fill="#4e4e4e"/><rect x="111" y="8" width="1" height="9" fill="#4e4e4e"/><rect x="121" y="8" width="1" height="9" fill="#4e4e4e"/><rect x="131" y="8" width="1" height="9" fill="#4e4e4e"/><rect x="141" y="0" width="1" height="17" fill="#6e6e6e"/><rect x="151" y="8" width="1" height="9" fill="#4e4e4e"/><rect x="161" y="8" width="1" height="9" fill="#4e4e4e"/><rect x="171" y="8" width="1" height="9" fill="#4e4e4e"/><rect x="181" y="8" width="1" height="9" fill="#4e4e4e"/><rect x="191" y="0" width="1" height="17" fill="#6e6e6e"/><rect x="201" y="8" width="1" height="9" fill="#4e4e4e"/><rect x="211" y="8" width="1" height="9" fill="#4e4e4e"/><rect x="221" y="8" width="1" height="9" fill="#4e4e4e"/><rect x="231" y="8" width="1" height="9" fill="#4e4e4e"/><rect x="241" y="0" width="1" height="17" fill="#6e6e6e"/><rect x="251" y="8" width="1" height="9" fill="#4e4e4e"/><rect x="261" y="8" width="1" height="9" fill="#4e4e4e"/><rect x="271" y="8" width="1" height="9" fill="#4e4e4e"/><rect x="281" y="8" width="1" height="9" fill="#4e4e4e"/><rect x="291" y="0" width="1" height="17" fill="#6e6e6e"/><rect x="301" y="8" width="1" height="9" fill="#4e4e4e"/><rect x="311" y="8" width="1" height="9" fill="#4e4e4e"/><rect x="321" y="8" width="1" height="9" fill="#4e4e4e"/><rect x="331" y="8" width="1" height="9" fill="#4e4e4e"/><rect x="341" y="0" width="1" height="17" fill="#6e6e6e"/><rect x="351" y="8" width="1" height="9" fill="#4e4e4e"/><rect x="361" y="8" width="1" height="9" fill="#4e4e4e"/><rect x="371" y="8" width="1" height="9" fill="#4e4e4e"/><rect x="381" y="8" width="1" height="9" fill="#4e4e4e"/><rect x="391" y="0" width="1" height="17" fill="#6e6e6e"/><rect x="401" y="8" width="1" height="9" fill="#4e4e4e"/><rect x="411" y="8" width="1" height="9" fill="#4e4e4e"/><rect x="421" y="8" width="1" height="9" fill="#4e4e4e"/><rect x="431" y="8" width="1" height="9" fill="#4e4e4e"/><rect x="441" y="0" width="1" height="17" fill="#6e6e6e"/><rect x="451" y="8" width="1" height="9" fill="#4e4e4e"/><rect x="461" y="8" width="1" height="9" fill="#4e4e4e"/><rect x="471" y="8" width="1" height="9" fill="#4e4e4e"/><rect x="481" y="8" width="1" height="9" fill="#4e4e4e"/><rect x="491" y="0" width="1" height="17" fill="#6e6e6e"/><rect x="501" y="8" width="1" height="9" fill="#4e4e4e"/><rect x="511" y="8" width="1" height="9" fill="#4e4e4e"/><rect x="521" y="8" width="1" height="9" fill="#4e4e4e"/><rect x="531" y="8" width="1" height="9" fill="#4e4e4e"/><rect x="541" y="0" width="1" height="17" fill="#6e6e6e"/><rect x="551" y="8" width="1" height="9" fill="#4e4e4e"/><rect x="561" y="8" width="1" height="9" fill="#4e4e4e"/><rect x="571" y="8" width="1" height="9" fill="#4e4e4e"/><rect x="581" y="8" width="1" height="9" fill="#4e4e4e"/><rect x="591" y="0" width="1" height="17" fill="#6e6e6e"/><rect x="601" y="8" width="1" height="9" fill="#4e4e4e"/><rect x="611" y="8" width="1" height="9" fill="#4e4e4e"/><rect x="621" y="8" width="1" height="9" fill="#4e4e4e"/><rect x="631" y="8" width="1" height="9" fill="#4e4e4e"/><rect x="641" y="0" width="1" height="17" fill="#6e6e6e"/><rect x="651" y="8" width="1" height="9" fill="#4e4e4e"/><rect x="661" y="8" width="1" height="9" fill="#4e4e4e"/><rect x="671" y="8" width="1" height="9" fill="#4e4e4e"/><rect x="681" y="8" width="1" height="9" fill="#4e4e4e"/><rect x="691" y="0" width="1" height="17" fill="#6e6e6e"/><rect x="701" y="8" width="1" height="9" fill="#4e4e4e"/><rect x="711" y="8" width="1" height="9" fill="#4e4e4e"/><rect x="721" y="8" width="1" height="9" fill="#4e4e4e"/><rect x="731" y="8" width="1" height="9" fill="#4e4e4e"/><rect x="741" y="0" width="1" height="17" fill="#6e6e6e"/><rect x="751" y="8" width="1" height="9" fill="#4e4e4e"/><rect x="761" y="8" width="1" height="9" fill="#4e4e4e"/><rect x="771" y="8" width="1" height="9" fill="#4e4e4e"/><rect x="781" y="8" width="1" height="9" fill="#4e4e4e"/><rect x="791" y="0" width="1" height="17" fill="#6e6e6e"/><rect x="801" y="8" width="1" height="9" fill="#4e4e4e"/><rect x="811" y="8" width="1" height="9" fill="#4e4e4e"/><rect x="821" y="8" width="1" height="9" fill="#4e4e4e"/><rect x="831" y="8" width="1" height="9" fill="#4e4e4e"/><rect x="841" y="0" width="1" height="17" fill="#6e6e6e"/><rect x="851" y="8" width="1" height="9" fill="#4e4e4e"/><rect x="861" y="8" width="1" height="9" fill="#4e4e4e"/><rect x="871" y="8" width="1" height="9" fill="#4e4e4e"/><rect x="881" y="8" width="1" height="9" fill="#4e4e4e"/><rect x="891" y="0" width="1" height="17" fill="#6e6e6e"/><rect x="901" y="8" width="1" height="9" fill="#4e4e4e"/><rect x="911" y="8" width="1" height="9" fill="#4e4e4e"/><rect x="921" y="8" width="1" height="9" fill="#4e4e4e"/><rect x="931" y="8" width="1" height="9" fill="#4e4e4e"/><rect x="941" y="0" width="1" height="17" fill="#6e6e6e"/><rect x="951" y="8" width="1" height="9" fill="#4e4e4e"/><rect x="961" y="8" width="1" height="9" fill="#4e4e4e"/><rect x="971" y="8" width="1" height="9" fill="#4e4e4e"/><rect x="981" y="8" width="1" height="9" fill="#4e4e4e"/><rect x="991" y="0" width="1" height="17" fill="#6e6e6e"/><rect x="1001" y="8" width="1" height="9" fill="#4e4e4e"/><rect x="1011" y="8" width="1" height="9" fill="#4e4e4e"/><rect x="1021" y="8" width="1" height="9" fill="#4e4e4e"/><rect x="1031" y="8" width="1" height="9" fill="#4e4e4e"/><rect x="1041" y="0" width="1" height="17" fill="#6e6e6e"/><rect x="1051" y="8" width="1" height="9" fill="#4e4e4e"/><rect x="1061" y="8" width="1" height="9" fill="#4e4e4e"/><rect x="1071" y="8" width="1" height="9" fill="#4e4e4e"/><rect x="1081" y="8" width="1" height="9" fill="#4e4e4e"/><rect x="1091" y="0" width="1" height="17" fill="#6e6e6e"/><rect x="1101" y="8" width="1" height="9" fill="#4e4e4e"/><rect x="1111" y="8" width="1" height="9" fill="#4e4e4e"/><rect x="1121" y="8" width="1" height="9" fill="#4e4e4e"/><rect x="1131" y="8" width="1" height="9" fill="#4e4e4e"/><rect x="1141" y="0" width="1" height="17" fill="#6e6e6e"/><rect x="1151" y="8" width="1" height="9" fill="#4e4e4e"/><rect x="1161" y="8" width="1" height="9" fill="#4e4e4e"/><rect x="1171" y="8" width="1" height="9" fill="#4e4e4e"/><rect x="1181" y="8" width="1" height="9" fill="#4e4e4e"/><rect x="1191" y="0" width="1" height="17" fill="#6e6e6e"/><rect x="1201" y="8" width="1" height="9" fill="#4e4e4e"/><rect x="1211" y="8" width="1" height="9" fill="#4e4e4e"/><rect x="1221" y="8" width="1" height="9" fill="#4e4e4e"/><rect x="1231" y="8" width="1" height="9" fill="#4e4e4e"/><rect x="1241" y="0" width="1" height="17" fill="#6e6e6e"/><rect x="1251" y="8" width="1" height="9" fill="#4e4e4e"/><rect x="1261" y="8" width="1" height="9" fill="#4e4e4e"/><rect x="1271" y="8" width="1" height="9" fill="#4e4e4e"/><rect x="1281" y="8" width="1" height="9" fill="#4e4e4e"/><rect x="1291" y="0" width="1" height="17" fill="#6e6e6e"/><rect x="1301" y="8" width="1" height="9" fill="#4e4e4e"/><rect x="1311" y="8" width="1" height="9" fill="#4e4e4e"/><rect x="1321" y="8" width="1" height="9" fill="#4e4e4e"/><rect x="1331" y="8" width="1" height="9" fill="#4e4e4e"/><rect x="1341" y="0" width="1" height="17" fill="#6e6e6e"/><rect x="1351" y="8" width="1" height="9" fill="#4e4e4e"/><rect x="1361" y="8" width="1" height="9" fill="#4e4e4e"/><rect x="1371" y="8" width="1" height="9" fill="#4e4e4e"/><rect x="1381" y="8" width="1" height="9" fill="#4e4e4e"/><rect x="1391" y="0" width="1" height="17" fill="#6e6e6e"/><rect x="1401" y="8" width="1" height="9" fill="#4e4e4e"/><rect x="1411" y="8" width="1" height="9" fill="#4e4e4e"/><rect x="1421" y="8" width="1" height="9" fill="#4e4e4e"/><rect x="1431" y="8" width="1" height="9" fill="#4e4e4e"/><g fill="#c6c6c6" font-size="10.2" font-family="Liberation Sans, sans-serif"><text x="94" y="20">450</text><text x="144" y="20">400</text><text x="194" y="20">350</text><text x="244" y="20">300</text><text x="294" y="20">250</text><text x="344" y="20">200</text><text x="394" y="20">150</text><text x="444" y="20">100</text><text x="494" y="20">50</text><text x="544" y="20">0</text><text x="594" y="20">50</text><text x="644" y="20">100</text><text x="694" y="20">150</text><text x="744" y="20">200</text><text x="794" y="20">250</text><text x="844" y="20">300</text><text x="894" y="20">350</text><text x="944" y="20">400</text><text x="994" y="20">450</text><text x="1044" y="20">500</text><text x="1094" y="20">550</text><text x="1144" y="20">600</text><text x="1194" y="20">650</text><text x="1244" y="20">700</text><text x="1294" y="20">750</text><text x="1344" y="20">800</text><text x="1394" y="20">850</text></g></svg>
<svg class="a" style="left:0;top:97px" width="94" height="841" viewBox="0 0 94 841"><rect x="77" y="0" width="17" height="841" fill="#333"/><rect x="77" y="41" width="17" height="1" fill="#6e6e6e"/><rect x="90" y="51" width="4" height="1" fill="#5a5a5a"/><rect x="90" y="61" width="4" height="1" fill="#5a5a5a"/><rect x="90" y="71" width="4" height="1" fill="#5a5a5a"/><rect x="90" y="81" width="4" height="1" fill="#5a5a5a"/><rect x="77" y="91" width="17" height="1" fill="#6e6e6e"/><rect x="90" y="101" width="4" height="1" fill="#5a5a5a"/><rect x="90" y="111" width="4" height="1" fill="#5a5a5a"/><rect x="90" y="121" width="4" height="1" fill="#5a5a5a"/><rect x="90" y="131" width="4" height="1" fill="#5a5a5a"/><rect x="77" y="141" width="17" height="1" fill="#6e6e6e"/><rect x="90" y="151" width="4" height="1" fill="#5a5a5a"/><rect x="90" y="161" width="4" height="1" fill="#5a5a5a"/><rect x="90" y="171" width="4" height="1" fill="#5a5a5a"/><rect x="90" y="181" width="4" height="1" fill="#5a5a5a"/><rect x="77" y="191" width="17" height="1" fill="#6e6e6e"/><rect x="90" y="201" width="4" height="1" fill="#5a5a5a"/><rect x="90" y="211" width="4" height="1" fill="#5a5a5a"/><rect x="90" y="221" width="4" height="1" fill="#5a5a5a"/><rect x="90" y="231" width="4" height="1" fill="#5a5a5a"/><rect x="77" y="241" width="17" height="1" fill="#6e6e6e"/><rect x="90" y="251" width="4" height="1" fill="#5a5a5a"/><rect x="90" y="261" width="4" height="1" fill="#5a5a5a"/><rect x="90" y="271" width="4" height="1" fill="#5a5a5a"/><rect x="90" y="281" width="4" height="1" fill="#5a5a5a"/><rect x="77" y="291" width="17" height="1" fill="#6e6e6e"/><rect x="90" y="301" width="4" height="1" fill="#5a5a5a"/><rect x="90" y="311" width="4" height="1" fill="#5a5a5a"/><rect x="90" y="321" width="4" height="1" fill="#5a5a5a"/><rect x="90" y="331" width="4" height="1" fill="#5a5a5a"/><rect x="77" y="341" width="17" height="1" fill="#6e6e6e"/><rect x="90" y="351" width="4" height="1" fill="#5a5a5a"/><rect x="90" y="361" width="4" height="1" fill="#5a5a5a"/><rect x="90" y="371" width="4" height="1" fill="#5a5a5a"/><rect x="90" y="381" width="4" height="1" fill="#5a5a5a"/><rect x="77" y="391" width="17" height="1" fill="#6e6e6e"/><rect x="90" y="401" width="4" height="1" fill="#5a5a5a"/><rect x="90" y="411" width="4" height="1" fill="#5a5a5a"/><rect x="90" y="421" width="4" height="1" fill="#5a5a5a"/><rect x="90" y="431" width="4" height="1" fill="#5a5a5a"/><rect x="77" y="441" width="17" height="1" fill="#6e6e6e"/><rect x="90" y="451" width="4" height="1" fill="#5a5a5a"/><rect x="90" y="461" width="4" height="1" fill="#5a5a5a"/><rect x="90" y="471" width="4" height="1" fill="#5a5a5a"/><rect x="90" y="481" width="4" height="1" fill="#5a5a5a"/><rect x="77" y="491" width="17" height="1" fill="#6e6e6e"/><rect x="90" y="501" width="4" height="1" fill="#5a5a5a"/><rect x="90" y="511" width="4" height="1" fill="#5a5a5a"/><rect x="90" y="521" width="4" height="1" fill="#5a5a5a"/><rect x="90" y="531" width="4" height="1" fill="#5a5a5a"/><rect x="77" y="541" width="17" height="1" fill="#6e6e6e"/><rect x="90" y="551" width="4" height="1" fill="#5a5a5a"/><rect x="90" y="561" width="4" height="1" fill="#5a5a5a"/><rect x="90" y="571" width="4" height="1" fill="#5a5a5a"/><rect x="90" y="581" width="4" height="1" fill="#5a5a5a"/><rect x="77" y="591" width="17" height="1" fill="#6e6e6e"/><rect x="90" y="601" width="4" height="1" fill="#5a5a5a"/><rect x="90" y="611" width="4" height="1" fill="#5a5a5a"/><rect x="90" y="621" width="4" height="1" fill="#5a5a5a"/><rect x="90" y="631" width="4" height="1" fill="#5a5a5a"/><rect x="77" y="641" width="17" height="1" fill="#6e6e6e"/><rect x="90" y="651" width="4" height="1" fill="#5a5a5a"/><rect x="90" y="661" width="4" height="1" fill="#5a5a5a"/><rect x="90" y="671" width="4" height="1" fill="#5a5a5a"/><rect x="90" y="681" width="4" height="1" fill="#5a5a5a"/><rect x="77" y="691" width="17" height="1" fill="#6e6e6e"/><rect x="90" y="701" width="4" height="1" fill="#5a5a5a"/><rect x="90" y="711" width="4" height="1" fill="#5a5a5a"/><rect x="90" y="721" width="4" height="1" fill="#5a5a5a"/><rect x="90" y="731" width="4" height="1" fill="#5a5a5a"/><rect x="77" y="741" width="17" height="1" fill="#6e6e6e"/><rect x="90" y="751" width="4" height="1" fill="#5a5a5a"/><rect x="90" y="761" width="4" height="1" fill="#5a5a5a"/><rect x="90" y="771" width="4" height="1" fill="#5a5a5a"/><rect x="90" y="781" width="4" height="1" fill="#5a5a5a"/><rect x="77" y="791" width="17" height="1" fill="#6e6e6e"/><rect x="90" y="801" width="4" height="1" fill="#5a5a5a"/><rect x="90" y="811" width="4" height="1" fill="#5a5a5a"/><rect x="90" y="821" width="4" height="1" fill="#5a5a5a"/><rect x="90" y="831" width="4" height="1" fill="#5a5a5a"/><rect x="77" y="841" width="17" height="1" fill="#6e6e6e"/><rect x="90" y="31" width="4" height="1" fill="#5a5a5a"/><rect x="77" y="0" width="17" height="17" fill="#333"/><path d="M78 6.5 H94 M85.5 0 V17" stroke="#5a5a5a" stroke-width="1" stroke-dasharray="1 1"/><g fill="#c6c6c6" font-size="10.2" font-family="Liberation Sans, sans-serif"><text x="82.5" y="58.5" text-anchor="middle">4</text><text x="82.5" y="68.4" text-anchor="middle">0</text><text x="82.5" y="78.3" text-anchor="middle">0</text><text x="82.5" y="108.5" text-anchor="middle">4</text><text x="82.5" y="118.4" text-anchor="middle">5</text><text x="82.5" y="128.3" text-anchor="middle">0</text><text x="82.5" y="158.5" text-anchor="middle">5</text><text x="82.5" y="168.4" text-anchor="middle">0</text><text x="82.5" y="178.3" text-anchor="middle">0</text><text x="82.5" y="208.5" text-anchor="middle">5</text><text x="82.5" y="218.4" text-anchor="middle">5</text><text x="82.5" y="228.3" text-anchor="middle">0</text><text x="82.5" y="258.5" text-anchor="middle">6</text><text x="82.5" y="268.4" text-anchor="middle">0</text><text x="82.5" y="278.3" text-anchor="middle">0</text><text x="82.5" y="308.5" text-anchor="middle">6</text><text x="82.5" y="318.4" text-anchor="middle">5</text><text x="82.5" y="328.3" text-anchor="middle">0</text><text x="82.5" y="358.5" text-anchor="middle">7</text><text x="82.5" y="368.4" text-anchor="middle">0</text><text x="82.5" y="378.3" text-anchor="middle">0</text><text x="82.5" y="408.5" text-anchor="middle">7</text><text x="82.5" y="418.4" text-anchor="middle">5</text><text x="82.5" y="428.3" text-anchor="middle">0</text><text x="82.5" y="458.5" text-anchor="middle">8</text><text x="82.5" y="468.4" text-anchor="middle">0</text><text x="82.5" y="478.3" text-anchor="middle">0</text><text x="82.5" y="508.5" text-anchor="middle">8</text><text x="82.5" y="518.4" text-anchor="middle">5</text><text x="82.5" y="528.3" text-anchor="middle">0</text><text x="82.5" y="558.5" text-anchor="middle">9</text><text x="82.5" y="568.4" text-anchor="middle">0</text><text x="82.5" y="578.3" text-anchor="middle">0</text><text x="82.5" y="608.5" text-anchor="middle">9</text><text x="82.5" y="618.4" text-anchor="middle">5</text><text x="82.5" y="628.3" text-anchor="middle">0</text><text x="82.5" y="648.6" text-anchor="middle">1</text><text x="82.5" y="658.5" text-anchor="middle">0</text><text x="82.5" y="668.4" text-anchor="middle">0</text><text x="82.5" y="678.3" text-anchor="middle">0</text><text x="82.5" y="698.6" text-anchor="middle">1</text><text x="82.5" y="708.5" text-anchor="middle">0</text><text x="82.5" y="718.4" text-anchor="middle">5</text><text x="82.5" y="728.3" text-anchor="middle">0</text><text x="82.5" y="748.6" text-anchor="middle">1</text><text x="82.5" y="758.5" text-anchor="middle">1</text><text x="82.5" y="768.4" text-anchor="middle">0</text><text x="82.5" y="778.3" text-anchor="middle">0</text><text x="82.5" y="798.6" text-anchor="middle">1</text><text x="82.5" y="808.5" text-anchor="middle">1</text><text x="82.5" y="818.4" text-anchor="middle">5</text><text x="82.5" y="828.3" text-anchor="middle">0</text><text x="82.5" y="848.6" text-anchor="middle">1</text><text x="82.5" y="858.5" text-anchor="middle">2</text><text x="82.5" y="868.4" text-anchor="middle">0</text><text x="82.5" y="878.3" text-anchor="middle">0</text><text x="82.5" y="28.5" text-anchor="middle">0</text></g></svg>
<!-- p_art -->
<svg class="a" style="left:0;top:114px" width="1441" height="824" viewBox="0 114 1441 824"><defs><path id="rib" d="M1001.1 112.0 L1001.0 147.0 L1000.9 150.5 L1000.6 154.1 L1000.0 157.8 L999.3 161.5 L998.4 165.3 L997.4 169.1 L996.1 172.9 L994.7 176.7 L993.2 180.5 L991.6 184.3 L989.8 188.1 L987.9 191.8 L985.9 195.5 L983.9 199.2 L981.7 202.8 L979.5 206.3 L977.2 209.8 L974.9 213.2 L972.5 216.4 L970.1 219.6 L967.7 222.7 L965.3 225.6 L962.9 228.4 L960.5 231.0 L717.0 494.0 L934.0 737.0 M1004.2 112.0 L1004.1 147.2 L1004.0 150.8 L1003.7 154.4 L1003.1 158.0 L1002.4 161.8 L1001.5 165.5 L1000.5 169.3 L999.2 173.1 L997.9 177.0 L996.4 180.8 L994.7 184.6 L993.0 188.4 L991.1 192.2 L989.1 196.0 L987.1 199.7 L984.9 203.3 L982.7 206.9 L980.4 210.4 L978.1 213.8 L975.8 217.0 L973.4 220.2 L971.0 223.3 L968.6 226.2 L966.2 229.0 L963.8 231.6 L721.2 494.0 L936.2 734.9 M1007.3 112.0 L1007.2 147.5 L1007.1 151.0 L1006.7 154.6 L1006.2 158.3 L1005.5 162.0 L1004.6 165.8 L1003.6 169.6 L1002.4 173.4 L1001.0 177.3 L999.5 181.1 L997.9 185.0 L996.1 188.8 L994.2 192.7 L992.3 196.4 L990.2 200.2 L988.1 203.8 L985.9 207.4 L983.7 210.9 L981.4 214.3 L979.0 217.7 L976.7 220.8 L974.3 223.9 L971.9 226.8 L969.5 229.6 L967.2 232.2 L725.4 494.0 L938.5 732.9 M1010.3 112.0 L1010.3 147.8 L1010.1 151.2 L1009.8 154.8 L1009.3 158.5 L1008.6 162.2 L1007.7 166.0 L1006.7 169.8 L1005.5 173.7 L1004.1 177.6 L1002.6 181.5 L1001.0 185.4 L999.3 189.2 L997.4 193.1 L995.5 196.9 L993.4 200.6 L991.3 204.3 L989.1 207.9 L986.9 211.5 L984.6 214.9 L982.3 218.3 L980.0 221.5 L977.6 224.5 L975.2 227.5 L972.9 230.3 L970.5 232.9 L729.6 494.0 L940.8 730.8 M1013.4 112.0 L1013.3 148.0 L1013.2 151.5 L1012.9 155.1 L1012.4 158.7 L1011.7 162.5 L1010.8 166.2 L1009.8 170.1 L1008.6 174.0 L1007.2 177.9 L1005.8 181.8 L1004.1 185.7 L1002.4 189.6 L1000.6 193.5 L998.7 197.3 L996.6 201.1 L994.5 204.8 L992.4 208.5 L990.1 212.1 L987.9 215.5 L985.6 218.9 L983.2 222.1 L980.9 225.2 L978.5 228.1 L976.2 230.9 L973.8 233.5 L733.7 494.0 L943.0 728.8 M1016.5 112.0 L1016.4 148.2 L1016.3 151.7 L1016.0 155.3 L1015.5 158.9 L1014.8 162.7 L1013.9 166.5 L1012.9 170.4 L1011.7 174.3 L1010.4 178.2 L1008.9 182.1 L1007.3 186.1 L1005.6 190.0 L1003.8 193.9 L1001.8 197.8 L999.8 201.6 L997.7 205.3 L995.6 209.0 L993.4 212.6 L991.1 216.1 L988.8 219.5 L986.5 222.7 L984.2 225.8 L981.8 228.8 L979.5 231.5 L977.2 234.1 L737.9 494.0 L945.2 726.8 M1019.6 112.0 L1019.5 148.5 L1019.4 151.9 L1019.1 155.5 L1018.6 159.2 L1017.9 162.9 L1017.0 166.7 L1016.0 170.6 L1014.8 174.5 L1013.5 178.5 L1012.0 182.5 L1010.4 186.4 L1008.7 190.4 L1006.9 194.3 L1005.0 198.2 L1003.0 202.1 L1000.9 205.9 L998.8 209.6 L996.6 213.2 L994.4 216.7 L992.1 220.1 L989.8 223.3 L987.5 226.4 L985.1 229.4 L982.8 232.2 L980.5 234.8 L742.1 494.0 L947.5 724.7 M1022.7 112.0 L1022.6 148.8 L1022.5 152.2 L1022.2 155.7 L1021.7 159.4 L1021.0 163.1 L1020.1 167.0 L1019.1 170.9 L1017.9 174.8 L1016.6 178.8 L1015.2 182.8 L1013.6 186.8 L1011.9 190.8 L1010.1 194.7 L1008.2 198.7 L1006.2 202.6 L1004.2 206.4 L1002.0 210.1 L999.9 213.7 L997.6 217.3 L995.4 220.7 L993.1 224.0 L990.8 227.1 L988.5 230.0 L986.1 232.8 L983.8 235.4 L746.3 494.0 L949.8 722.6 M1025.7 112.0 L1025.7 149.0 L1025.6 152.4 L1025.3 156.0 L1024.8 159.6 L1024.1 163.4 L1023.2 167.2 L1022.2 171.1 L1021.1 175.1 L1019.7 179.1 L1018.3 183.1 L1016.7 187.1 L1015.0 191.2 L1013.3 195.2 L1011.4 199.1 L1009.4 203.0 L1007.4 206.9 L1005.3 210.6 L1003.1 214.3 L1000.9 217.9 L998.6 221.3 L996.4 224.6 L994.1 227.7 L991.8 230.7 L989.5 233.4 L987.2 236.0 L750.5 494.0 L952.0 720.6 M1028.8 112.0 L1028.8 149.2 L1028.7 152.7 L1028.4 156.2 L1027.9 159.9 L1027.2 163.6 L1026.3 167.5 L1025.3 171.4 L1024.2 175.4 L1022.9 179.4 L1021.4 183.4 L1019.9 187.5 L1018.2 191.5 L1016.4 195.6 L1014.6 199.6 L1012.6 203.5 L1010.6 207.4 L1008.5 211.2 L1006.3 214.9 L1004.1 218.5 L1001.9 221.9 L999.6 225.2 L997.4 228.3 L995.1 231.3 L992.8 234.1 L990.5 236.6 L754.7 494.0 L954.2 718.5 M1031.9 112.0 L1031.8 149.5 L1031.7 152.9 L1031.4 156.4 L1031.0 160.1 L1030.3 163.8 L1029.4 167.7 L1028.4 171.6 L1027.3 175.6 L1026.0 179.7 L1024.6 183.8 L1023.0 187.9 L1021.4 191.9 L1019.6 196.0 L1017.7 200.0 L1015.8 204.0 L1013.8 207.9 L1011.7 211.7 L1009.6 215.4 L1007.4 219.0 L1005.2 222.5 L1002.9 225.8 L1000.6 229.0 L998.4 231.9 L996.1 234.7 L993.9 237.2 L758.9 494.0 L956.5 716.5 M1035.0 112.0 L1034.9 149.8 L1034.8 153.1 L1034.5 156.6 L1034.0 160.3 L1033.4 164.1 L1032.5 168.0 L1031.5 171.9 L1030.4 175.9 L1029.1 180.0 L1027.7 184.1 L1026.2 188.2 L1024.5 192.3 L1022.8 196.4 L1020.9 200.5 L1019.0 204.5 L1017.0 208.4 L1014.9 212.3 L1012.8 216.0 L1010.6 219.6 L1008.4 223.1 L1006.2 226.4 L1003.9 229.6 L1001.7 232.6 L999.4 235.3 L997.2 237.9 L763.0 494.0 L958.8 714.5 M1038.1 112.0 L1038.0 150.0 L1037.9 153.4 L1037.6 156.9 L1037.1 160.5 L1036.5 164.3 L1035.6 168.2 L1034.7 172.2 L1033.5 176.2 L1032.2 180.3 L1030.8 184.4 L1029.3 188.6 L1027.7 192.7 L1025.9 196.8 L1024.1 200.9 L1022.2 205.0 L1020.2 208.9 L1018.1 212.8 L1016.0 216.6 L1013.9 220.2 L1011.7 223.7 L1009.5 227.1 L1007.2 230.2 L1005.0 233.2 L1002.7 236.0 L1000.5 238.5 L767.2 494.0 L961.0 712.4 M1041.1 112.0 L1041.1 150.2 L1041.0 153.6 L1040.7 157.1 L1040.2 160.8 L1039.6 164.5 L1038.7 168.4 L1037.8 172.4 L1036.6 176.5 L1035.4 180.6 L1034.0 184.8 L1032.5 188.9 L1030.8 193.1 L1029.1 197.3 L1027.3 201.4 L1025.4 205.4 L1023.4 209.4 L1021.4 213.3 L1019.3 217.1 L1017.1 220.8 L1014.9 224.3 L1012.7 227.7 L1010.5 230.9 L1008.3 233.8 L1006.1 236.6 L1003.9 239.1 L771.4 494.0 L963.2 710.4 M1044.2 112.0 L1044.2 150.5 L1044.1 153.8 L1043.8 157.3 L1043.3 161.0 L1042.7 164.8 L1041.8 168.7 L1040.9 172.7 L1039.8 176.8 L1038.5 180.9 L1037.1 185.1 L1035.6 189.3 L1034.0 193.5 L1032.3 197.7 L1030.5 201.8 L1028.6 205.9 L1026.6 209.9 L1024.6 213.9 L1022.5 217.7 L1020.4 221.4 L1018.2 224.9 L1016.0 228.3 L1013.8 231.5 L1011.6 234.5 L1009.4 237.2 L1007.2 239.8 L775.6 494.0 L965.5 708.3 M1047.3 112.0 L1047.3 150.8 L1047.2 154.1 L1046.9 157.6 L1046.4 161.2 L1045.8 165.0 L1044.9 168.9 L1044.0 172.9 L1042.9 177.0 L1041.6 181.2 L1040.2 185.4 L1038.7 189.6 L1037.1 193.9 L1035.4 198.1 L1033.6 202.3 L1031.8 206.4 L1029.8 210.5 L1027.8 214.4 L1025.7 218.3 L1023.6 222.0 L1021.5 225.5 L1019.3 228.9 L1017.1 232.1 L1014.9 235.1 L1012.7 237.9 L1010.5 240.4 L779.8 494.0 L967.8 706.2 M1050.4 112.0 L1050.4 151.0 L1050.3 154.3 L1050.0 157.8 L1049.5 161.4 L1048.9 165.2 L1048.1 169.2 L1047.1 173.2 L1046.0 177.3 L1044.7 181.5 L1043.4 185.7 L1041.9 190.0 L1040.3 194.3 L1038.6 198.5 L1036.8 202.7 L1034.9 206.9 L1033.0 211.0 L1031.0 215.0 L1029.0 218.8 L1026.9 222.6 L1024.7 226.1 L1022.6 229.5 L1020.4 232.8 L1018.2 235.7 L1016.0 238.5 L1013.9 241.0 L784.0 494.0 L970.0 704.2 M1053.5 112.0 L1053.4 151.2 L1053.3 154.5 L1053.1 158.0 L1052.6 161.7 L1052.0 165.5 L1051.2 169.4 L1050.2 173.5 L1049.1 177.6 L1047.9 181.8 L1046.5 186.1 L1045.0 190.4 L1043.4 194.7 L1041.8 198.9 L1040.0 203.2 L1038.1 207.4 L1036.2 211.5 L1034.2 215.5 L1032.2 219.4 L1030.1 223.2 L1028.0 226.8 L1025.8 230.2 L1023.7 233.4 L1021.5 236.4 L1019.4 239.1 L1017.2 241.6 L788.1 494.0 L972.2 702.2 M1056.5 112.0 L1056.5 151.5 L1056.4 154.8 L1056.1 158.2 L1055.7 161.9 L1055.0 165.7 L1054.3 169.7 L1053.3 173.7 L1052.2 177.9 L1051.0 182.1 L1049.6 186.4 L1048.2 190.7 L1046.6 195.0 L1044.9 199.4 L1043.2 203.6 L1041.3 207.8 L1039.4 212.0 L1037.5 216.0 L1035.4 220.0 L1033.4 223.7 L1031.3 227.4 L1029.1 230.8 L1027.0 234.0 L1024.8 237.0 L1022.7 239.8 L1020.5 242.2 L792.3 494.0 L974.5 700.1 M1059.6 112.0 L1059.6 151.8 L1059.5 155.0 L1059.2 158.5 L1058.8 162.1 L1058.1 165.9 L1057.4 169.9 L1056.4 174.0 L1055.3 178.2 L1054.1 182.4 L1052.8 186.7 L1051.3 191.1 L1049.8 195.4 L1048.1 199.8 L1046.4 204.1 L1044.5 208.3 L1042.6 212.5 L1040.7 216.6 L1038.7 220.5 L1036.6 224.3 L1034.5 228.0 L1032.4 231.4 L1030.3 234.7 L1028.1 237.7 L1026.0 240.4 L1023.9 242.9 L796.5 494.0 L976.8 698.0 M1062.7 112.0 L1062.7 152.0 L1062.6 155.2 L1062.3 158.7 L1061.9 162.4 L1061.2 166.2 L1060.5 170.1 L1059.5 174.2 L1058.4 178.4 L1057.2 182.7 L1055.9 187.1 L1054.5 191.4 L1052.9 195.8 L1051.3 200.2 L1049.5 204.5 L1047.7 208.8 L1045.8 213.0 L1043.9 217.1 L1041.9 221.1 L1039.9 224.9 L1037.8 228.6 L1035.7 232.0 L1033.6 235.3 L1031.4 238.3 L1029.3 241.0 L1027.2 243.5 L800.7 494.0 L979.0 696.0 M733.0 112 Q728.3 132 726.6 152.0 M736.1 112 Q731.4 132 729.8 152.2 M739.3 112 Q734.6 132 732.9 152.3 M742.4 112 Q737.7 132 736.1 152.4 M745.5 112 Q740.9 132 739.2 152.6 M748.7 112 Q744.0 132 742.4 152.8 M751.8 112 Q747.2 132 745.6 152.9 M754.9 112 Q750.3 132 748.7 153.1 M758.1 112 Q753.5 132 751.9 153.2 M761.2 112 Q756.6 132 755.0 153.3 M764.4 112 Q759.8 132 758.2 153.5 M767.5 112 Q762.9 132 761.4 153.7 M770.6 112 Q766.1 132 764.5 153.8 M773.8 112 Q769.2 132 767.7 153.9 M776.9 112 Q772.4 132 770.8 154.1 M780.0 112 Q775.5 132 774.0 154.2 M783.2 112 Q778.7 132 777.2 154.4 M786.3 112 Q781.8 132 780.3 154.6 M789.4 112 Q785.0 132 783.5 154.7 M792.6 112 Q788.1 132 786.6 154.8 M795.7 112 Q791.2 132 789.8 155.0 "/></defs><use href="#rib" fill="none" stroke="#7796ef" stroke-width="1.85"/><use href="#rib" fill="none" stroke="#272c63" stroke-width="1.0"/><use href="#rib" fill="none" stroke="#10122e" stroke-width="1.1" stroke-dasharray="5 11 3 17 6 9" stroke-opacity="0.4"/><rect x="725.5" y="150.5" width="3" height="3" fill="#fff" stroke="#4a78ee" stroke-width="1"/><rect x="728.5" y="150.5" width="3" height="3" fill="#fff" stroke="#4a78ee" stroke-width="1"/><rect x="731.5" y="150.5" width="3" height="3" fill="#fff" stroke="#4a78ee" stroke-width="1"/><rect x="734.5" y="152.5" width="3" height="3" fill="#fff" stroke="#4a78ee" stroke-width="1"/><rect x="737.5" y="152.5" width="3" height="3" fill="#fff" stroke="#4a78ee" stroke-width="1"/><rect x="740.5" y="152.5" width="3" height="3" fill="#fff" stroke="#4a78ee" stroke-width="1"/><rect x="744.5" y="152.5" width="3" height="3" fill="#fff" stroke="#4a78ee" stroke-width="1"/><rect x="747.5" y="152.5" width="3" height="3" fill="#fff" stroke="#4a78ee" stroke-width="1"/><rect x="750.5" y="152.5" width="3" height="3" fill="#fff" stroke="#4a78ee" stroke-width="1"/><rect x="753.5" y="152.5" width="3" height="3" fill="#fff" stroke="#4a78ee" stroke-width="1"/><rect x="756.5" y="152.5" width="3" height="3" fill="#fff" stroke="#4a78ee" stroke-width="1"/><rect x="759.5" y="152.5" width="3" height="3" fill="#fff" stroke="#4a78ee" stroke-width="1"/><rect x="763.5" y="152.5" width="3" height="3" fill="#fff" stroke="#4a78ee" stroke-width="1"/><rect x="766.5" y="152.5" width="3" height="3" fill="#fff" stroke="#4a78ee" stroke-width="1"/><rect x="769.5" y="152.5" width="3" height="3" fill="#fff" stroke="#4a78ee" stroke-width="1"/><rect x="772.5" y="152.5" width="3" height="3" fill="#fff" stroke="#4a78ee" stroke-width="1"/><rect x="775.5" y="152.5" width="3" height="3" fill="#fff" stroke="#4a78ee" stroke-width="1"/><rect x="778.5" y="152.5" width="3" height="3" fill="#fff" stroke="#4a78ee" stroke-width="1"/><rect x="781.5" y="154.5" width="3" height="3" fill="#fff" stroke="#4a78ee" stroke-width="1"/><rect x="785.5" y="154.5" width="3" height="3" fill="#fff" stroke="#4a78ee" stroke-width="1"/><rect x="788.5" y="154.5" width="3" height="3" fill="#fff" stroke="#4a78ee" stroke-width="1"/><rect x="1031.5" y="117.5" width="3" height="3" fill="#fff" stroke="#4a78ee" stroke-width="1"/><rect x="1034.5" y="117.5" width="3" height="3" fill="#fff" stroke="#4a78ee" stroke-width="1"/><rect x="1037.5" y="117.5" width="3" height="3" fill="#fff" stroke="#4a78ee" stroke-width="1"/><rect x="1041.5" y="117.5" width="3" height="3" fill="#fff" stroke="#4a78ee" stroke-width="1"/><rect x="1044.5" y="117.5" width="3" height="3" fill="#fff" stroke="#4a78ee" stroke-width="1"/><rect x="1047.5" y="117.5" width="3" height="3" fill="#fff" stroke="#4a78ee" stroke-width="1"/><rect x="1050.5" y="117.5" width="3" height="3" fill="#fff" stroke="#4a78ee" stroke-width="1"/><rect x="1054.5" y="117.5" width="3" height="3" fill="#fff" stroke="#4a78ee" stroke-width="1"/><rect x="1057.5" y="117.5" width="3" height="3" fill="#fff" stroke="#4a78ee" stroke-width="1"/><rect x="1060.5" y="117.5" width="3" height="3" fill="#fff" stroke="#4a78ee" stroke-width="1"/><rect x="1000.5" y="120.5" width="3" height="3" fill="#fff" stroke="#4a78ee" stroke-width="1"/><rect x="1003.5" y="120.5" width="3" height="3" fill="#fff" stroke="#4a78ee" stroke-width="1"/><rect x="1006.5" y="120.5" width="3" height="3" fill="#fff" stroke="#4a78ee" stroke-width="1"/><rect x="1009.5" y="120.5" width="3" height="3" fill="#fff" stroke="#4a78ee" stroke-width="1"/><rect x="1012.5" y="120.5" width="3" height="3" fill="#fff" stroke="#4a78ee" stroke-width="1"/><rect x="1015.5" y="120.5" width="3" height="3" fill="#fff" stroke="#4a78ee" stroke-width="1"/><rect x="1018.5" y="120.5" width="3" height="3" fill="#fff" stroke="#4a78ee" stroke-width="1"/><rect x="1021.5" y="120.5" width="3" height="3" fill="#fff" stroke="#4a78ee" stroke-width="1"/><rect x="1000.5" y="125.5" width="3" height="3" fill="#fff" stroke="#4a78ee" stroke-width="1"/><rect x="1003.5" y="125.5" width="3" height="3" fill="#fff" stroke="#4a78ee" stroke-width="1"/><rect x="1006.5" y="125.5" width="3" height="3" fill="#fff" stroke="#4a78ee" stroke-width="1"/><rect x="1009.5" y="125.5" width="3" height="3" fill="#fff" stroke="#4a78ee" stroke-width="1"/><rect x="1012.5" y="125.5" width="3" height="3" fill="#fff" stroke="#4a78ee" stroke-width="1"/><rect x="1015.5" y="125.5" width="3" height="3" fill="#fff" stroke="#4a78ee" stroke-width="1"/><rect x="1018.5" y="125.5" width="3" height="3" fill="#fff" stroke="#4a78ee" stroke-width="1"/><rect x="1021.5" y="125.5" width="3" height="3" fill="#fff" stroke="#4a78ee" stroke-width="1"/><rect x="1000.5" y="131.5" width="3" height="3" fill="#fff" stroke="#4a78ee" stroke-width="1"/><rect x="1002.5" y="131.5" width="3" height="3" fill="#fff" stroke="#4a78ee" stroke-width="1"/><rect x="1005.5" y="131.5" width="3" height="3" fill="#fff" stroke="#4a78ee" stroke-width="1"/><rect x="1008.5" y="131.5" width="3" height="3" fill="#fff" stroke="#4a78ee" stroke-width="1"/><rect x="1011.5" y="131.5" width="3" height="3" fill="#fff" stroke="#4a78ee" stroke-width="1"/><rect x="1014.5" y="131.5" width="3" height="3" fill="#fff" stroke="#4a78ee" stroke-width="1"/><rect x="1017.5" y="131.5" width="3" height="3" fill="#fff" stroke="#4a78ee" stroke-width="1"/><rect x="1000.5" y="146.5" width="3" height="3" fill="#fff" stroke="#4a78ee" stroke-width="1"/><rect x="1003.5" y="146.5" width="3" height="3" fill="#fff" stroke="#4a78ee" stroke-width="1"/><rect x="1006.5" y="147.5" width="3" height="3" fill="#fff" stroke="#4a78ee" stroke-width="1"/><rect x="1009.5" y="147.5" width="3" height="3" fill="#fff" stroke="#4a78ee" stroke-width="1"/><rect x="1012.5" y="147.5" width="3" height="3" fill="#fff" stroke="#4a78ee" stroke-width="1"/><rect x="1015.5" y="147.5" width="3" height="3" fill="#fff" stroke="#4a78ee" stroke-width="1"/><rect x="1018.5" y="148.5" width="3" height="3" fill="#fff" stroke="#4a78ee" stroke-width="1"/><rect x="1021.5" y="148.5" width="3" height="3" fill="#fff" stroke="#4a78ee" stroke-width="1"/><rect x="1024.5" y="148.5" width="3" height="3" fill="#fff" stroke="#4a78ee" stroke-width="1"/><rect x="1027.5" y="149.5" width="3" height="3" fill="#fff" stroke="#4a78ee" stroke-width="1"/><rect x="1030.5" y="149.5" width="3" height="3" fill="#fff" stroke="#4a78ee" stroke-width="1"/><rect x="1033.5" y="149.5" width="3" height="3" fill="#fff" stroke="#4a78ee" stroke-width="1"/><rect x="1036.5" y="149.5" width="3" height="3" fill="#fff" stroke="#4a78ee" stroke-width="1"/><rect x="1039.5" y="150.5" width="3" height="3" fill="#fff" stroke="#4a78ee" stroke-width="1"/><rect x="1042.5" y="150.5" width="3" height="3" fill="#fff" stroke="#4a78ee" stroke-width="1"/><rect x="1045.5" y="150.5" width="3" height="3" fill="#fff" stroke="#4a78ee" stroke-width="1"/><rect x="1048.5" y="151.5" width="3" height="3" fill="#fff" stroke="#4a78ee" stroke-width="1"/><rect x="1051.5" y="151.5" width="3" height="3" fill="#fff" stroke="#4a78ee" stroke-width="1"/><rect x="1054.5" y="151.5" width="3" height="3" fill="#fff" stroke="#4a78ee" stroke-width="1"/><rect x="1057.5" y="152.5" width="3" height="3" fill="#fff" stroke="#4a78ee" stroke-width="1"/><rect x="1060.5" y="152.5" width="3" height="3" fill="#fff" stroke="#4a78ee" stroke-width="1"/><rect x="1027.5" y="179.5" width="3" height="3" fill="#fff" stroke="#4a78ee" stroke-width="1"/><rect x="1030.5" y="180.5" width="3" height="3" fill="#fff" stroke="#4a78ee" stroke-width="1"/><rect x="1033.5" y="180.5" width="3" height="3" fill="#fff" stroke="#4a78ee" stroke-width="1"/><rect x="1036.5" y="180.5" width="3" height="3" fill="#fff" stroke="#4a78ee" stroke-width="1"/><rect x="1040.5" y="181.5" width="3" height="3" fill="#fff" stroke="#4a78ee" stroke-width="1"/><rect x="1043.5" y="182.5" width="3" height="3" fill="#fff" stroke="#4a78ee" stroke-width="1"/><rect x="1046.5" y="182.5" width="3" height="3" fill="#fff" stroke="#4a78ee" stroke-width="1"/><rect x="1049.5" y="182.5" width="3" height="3" fill="#fff" stroke="#4a78ee" stroke-width="1"/><rect x="1052.5" y="183.5" width="3" height="3" fill="#fff" stroke="#4a78ee" stroke-width="1"/><rect x="1026.5" y="185.5" width="3" height="3" fill="#fff" stroke="#4a78ee" stroke-width="1"/><rect x="1029.5" y="186.5" width="3" height="3" fill="#fff" stroke="#4a78ee" stroke-width="1"/><rect x="1032.5" y="186.5" width="3" height="3" fill="#fff" stroke="#4a78ee" stroke-width="1"/><rect x="1035.5" y="186.5" width="3" height="3" fill="#fff" stroke="#4a78ee" stroke-width="1"/><rect x="1038.5" y="187.5" width="3" height="3" fill="#fff" stroke="#4a78ee" stroke-width="1"/><rect x="1041.5" y="188.5" width="3" height="3" fill="#fff" stroke="#4a78ee" stroke-width="1"/><rect x="1044.5" y="188.5" width="3" height="3" fill="#fff" stroke="#4a78ee" stroke-width="1"/><rect x="1047.5" y="188.5" width="3" height="3" fill="#fff" stroke="#4a78ee" stroke-width="1"/><rect x="1050.5" y="189.5" width="3" height="3" fill="#fff" stroke="#4a78ee" stroke-width="1"/><rect x="1026.5" y="191.5" width="3" height="3" fill="#fff" stroke="#4a78ee" stroke-width="1"/><rect x="1028.5" y="192.5" width="3" height="3" fill="#fff" stroke="#4a78ee" stroke-width="1"/><rect x="1031.5" y="192.5" width="3" height="3" fill="#fff" stroke="#4a78ee" stroke-width="1"/><rect x="1034.5" y="192.5" width="3" height="3" fill="#fff" stroke="#4a78ee" stroke-width="1"/><rect x="1037.5" y="193.5" width="3" height="3" fill="#fff" stroke="#4a78ee" stroke-width="1"/><rect x="1039.5" y="194.5" width="3" height="3" fill="#fff" stroke="#4a78ee" stroke-width="1"/><rect x="1042.5" y="194.5" width="3" height="3" fill="#fff" stroke="#4a78ee" stroke-width="1"/><rect x="1045.5" y="194.5" width="3" height="3" fill="#fff" stroke="#4a78ee" stroke-width="1"/><rect x="1047.5" y="195.5" width="3" height="3" fill="#fff" stroke="#4a78ee" stroke-width="1"/><rect x="1025.5" y="197.5" width="3" height="3" fill="#fff" stroke="#4a78ee" stroke-width="1"/><rect x="1028.5" y="198.5" width="3" height="3" fill="#fff" stroke="#4a78ee" stroke-width="1"/><rect x="1030.5" y="198.5" width="3" height="3" fill="#fff" stroke="#4a78ee" stroke-width="1"/><rect x="1033.5" y="198.5" width="3" height="3" fill="#fff" stroke="#4a78ee" stroke-width="1"/><rect x="1035.5" y="199.5" width="3" height="3" fill="#fff" stroke="#4a78ee" stroke-width="1"/><rect x="1038.5" y="200.5" width="3" height="3" fill="#fff" stroke="#4a78ee" stroke-width="1"/><rect x="1040.5" y="200.5" width="3" height="3" fill="#fff" stroke="#4a78ee" stroke-width="1"/><rect x="1043.5" y="200.5" width="3" height="3" fill="#fff" stroke="#4a78ee" stroke-width="1"/><rect x="1045.5" y="201.5" width="3" height="3" fill="#fff" stroke="#4a78ee" stroke-width="1"/><rect x="1025.5" y="203.5" width="3" height="3" fill="#fff" stroke="#4a78ee" stroke-width="1"/><rect x="1027.5" y="204.5" width="3" height="3" fill="#fff" stroke="#4a78ee" stroke-width="1"/><rect x="1029.5" y="204.5" width="3" height="3" fill="#fff" stroke="#4a78ee" stroke-width="1"/><rect x="1031.5" y="204.5" width="3" height="3" fill="#fff" stroke="#4a78ee" stroke-width="1"/><rect x="1034.5" y="205.5" width="3" height="3" fill="#fff" stroke="#4a78ee" stroke-width="1"/><rect x="1036.5" y="206.5" width="3" height="3" fill="#fff" stroke="#4a78ee" stroke-width="1"/><rect x="1038.5" y="206.5" width="3" height="3" fill="#fff" stroke="#4a78ee" stroke-width="1"/><rect x="1041.5" y="206.5" width="3" height="3" fill="#fff" stroke="#4a78ee" stroke-width="1"/><rect x="1043.5" y="207.5" width="3" height="3" fill="#fff" stroke="#4a78ee" stroke-width="1"/><rect x="1024.5" y="209.5" width="3" height="3" fill="#fff" stroke="#4a78ee" stroke-width="1"/><rect x="1026.5" y="210.5" width="3" height="3" fill="#fff" stroke="#4a78ee" stroke-width="1"/><rect x="1028.5" y="210.5" width="3" height="3" fill="#fff" stroke="#4a78ee" stroke-width="1"/><rect x="1030.5" y="210.5" width="3" height="3" fill="#fff" stroke="#4a78ee" stroke-width="1"/><rect x="1032.5" y="211.5" width="3" height="3" fill="#fff" stroke="#4a78ee" stroke-width="1"/><rect x="1034.5" y="212.5" width="3" height="3" fill="#fff" stroke="#4a78ee" stroke-width="1"/><rect x="1036.5" y="212.5" width="3" height="3" fill="#fff" stroke="#4a78ee" stroke-width="1"/><rect x="1038.5" y="212.5" width="3" height="3" fill="#fff" stroke="#4a78ee" stroke-width="1"/><rect x="1040.5" y="213.5" width="3" height="3" fill="#fff" stroke="#4a78ee" stroke-width="1"/><rect x="1023.5" y="215.5" width="3" height="3" fill="#fff" stroke="#4a78ee" stroke-width="1"/><rect x="1025.5" y="216.5" width="3" height="3" fill="#fff" stroke="#4a78ee" stroke-width="1"/><rect x="1027.5" y="216.5" width="3" height="3" fill="#fff" stroke="#4a78ee" stroke-width="1"/><rect x="1029.5" y="216.5" width="3" height="3" fill="#fff" stroke="#4a78ee" stroke-width="1"/><rect x="1031.5" y="217.5" width="3" height="3" fill="#fff" stroke="#4a78ee" stroke-width="1"/><rect x="1033.5" y="218.5" width="3" height="3" fill="#fff" stroke="#4a78ee" stroke-width="1"/><rect x="1034.5" y="218.5" width="3" height="3" fill="#fff" stroke="#4a78ee" stroke-width="1"/><rect x="1036.5" y="218.5" width="3" height="3" fill="#fff" stroke="#4a78ee" stroke-width="1"/><rect x="1038.5" y="219.5" width="3" height="3" fill="#fff" stroke="#4a78ee" stroke-width="1"/><rect x="1023.5" y="221.5" width="3" height="3" fill="#fff" stroke="#4a78ee" stroke-width="1"/><rect x="1024.5" y="222.5" width="3" height="3" fill="#fff" stroke="#4a78ee" stroke-width="1"/><rect x="1026.5" y="222.5" width="3" height="3" fill="#fff" stroke="#4a78ee" stroke-width="1"/><rect x="1028.5" y="222.5" width="3" height="3" fill="#fff" stroke="#4a78ee" stroke-width="1"/><rect x="1029.5" y="223.5" width="3" height="3" fill="#fff" stroke="#4a78ee" stroke-width="1"/><rect x="1031.5" y="224.5" width="3" height="3" fill="#fff" stroke="#4a78ee" stroke-width="1"/><rect x="1033.5" y="224.5" width="3" height="3" fill="#fff" stroke="#4a78ee" stroke-width="1"/><rect x="1034.5" y="224.5" width="3" height="3" fill="#fff" stroke="#4a78ee" stroke-width="1"/><rect x="1036.5" y="225.5" width="3" height="3" fill="#fff" stroke="#4a78ee" stroke-width="1"/><rect x="981.5" y="194.5" width="3" height="3" fill="#fff" stroke="#4a78ee" stroke-width="1"/><rect x="984.5" y="195.5" width="3" height="3" fill="#fff" stroke="#4a78ee" stroke-width="1"/><rect x="987.5" y="196.5" width="3" height="3" fill="#fff" stroke="#4a78ee" stroke-width="1"/><rect x="990.5" y="197.5" width="3" height="3" fill="#fff" stroke="#4a78ee" stroke-width="1"/><rect x="994.5" y="198.5" width="3" height="3" fill="#fff" stroke="#4a78ee" stroke-width="1"/><rect x="997.5" y="198.5" width="3" height="3" fill="#fff" stroke="#4a78ee" stroke-width="1"/><rect x="1000.5" y="199.5" width="3" height="3" fill="#fff" stroke="#4a78ee" stroke-width="1"/><rect x="1003.5" y="200.5" width="3" height="3" fill="#fff" stroke="#4a78ee" stroke-width="1"/><rect x="1006.5" y="201.5" width="3" height="3" fill="#fff" stroke="#4a78ee" stroke-width="1"/><rect x="1009.5" y="201.5" width="3" height="3" fill="#fff" stroke="#4a78ee" stroke-width="1"/><rect x="1012.5" y="202.5" width="3" height="3" fill="#fff" stroke="#4a78ee" stroke-width="1"/><rect x="1015.5" y="203.5" width="3" height="3" fill="#fff" stroke="#4a78ee" stroke-width="1"/><rect x="1018.5" y="204.5" width="3" height="3" fill="#fff" stroke="#4a78ee" stroke-width="1"/><rect x="1021.5" y="205.5" width="3" height="3" fill="#fff" stroke="#4a78ee" stroke-width="1"/><rect x="1024.5" y="205.5" width="3" height="3" fill="#fff" stroke="#4a78ee" stroke-width="1"/><rect x="1027.5" y="206.5" width="3" height="3" fill="#fff" stroke="#4a78ee" stroke-width="1"/><rect x="1030.5" y="207.5" width="3" height="3" fill="#fff" stroke="#4a78ee" stroke-width="1"/><rect x="1033.5" y="208.5" width="3" height="3" fill="#fff" stroke="#4a78ee" stroke-width="1"/><rect x="1036.5" y="208.5" width="3" height="3" fill="#fff" stroke="#4a78ee" stroke-width="1"/><rect x="1039.5" y="209.5" width="3" height="3" fill="#fff" stroke="#4a78ee" stroke-width="1"/><rect x="1042.5" y="210.5" width="3" height="3" fill="#fff" stroke="#4a78ee" stroke-width="1"/><rect x="980.5" y="198.5" width="3" height="3" fill="#fff" stroke="#4a78ee" stroke-width="1"/><rect x="983.5" y="199.5" width="3" height="3" fill="#fff" stroke="#4a78ee" stroke-width="1"/><rect x="986.5" y="200.5" width="3" height="3" fill="#fff" stroke="#4a78ee" stroke-width="1"/><rect x="989.5" y="201.5" width="3" height="3" fill="#fff" stroke="#4a78ee" stroke-width="1"/><rect x="992.5" y="201.5" width="3" height="3" fill="#fff" stroke="#4a78ee" stroke-width="1"/><rect x="995.5" y="202.5" width="3" height="3" fill="#fff" stroke="#4a78ee" stroke-width="1"/><rect x="998.5" y="203.5" width="3" height="3" fill="#fff" stroke="#4a78ee" stroke-width="1"/><rect x="1001.5" y="204.5" width="3" height="3" fill="#fff" stroke="#4a78ee" stroke-width="1"/><rect x="1004.5" y="205.5" width="3" height="3" fill="#fff" stroke="#4a78ee" stroke-width="1"/><rect x="1008.5" y="206.5" width="3" height="3" fill="#fff" stroke="#4a78ee" stroke-width="1"/><rect x="1011.5" y="206.5" width="3" height="3" fill="#fff" stroke="#4a78ee" stroke-width="1"/><rect x="1014.5" y="207.5" width="3" height="3" fill="#fff" stroke="#4a78ee" stroke-width="1"/><rect x="1017.5" y="208.5" width="3" height="3" fill="#fff" stroke="#4a78ee" stroke-width="1"/><rect x="1020.5" y="209.5" width="3" height="3" fill="#fff" stroke="#4a78ee" stroke-width="1"/><rect x="974.5" y="208.5" width="3" height="3" fill="#fff" stroke="#4a78ee" stroke-width="1"/><rect x="977.5" y="209.5" width="3" height="3" fill="#fff" stroke="#4a78ee" stroke-width="1"/><rect x="980.5" y="210.5" width="3" height="3" fill="#fff" stroke="#4a78ee" stroke-width="1"/><rect x="983.5" y="211.5" width="3" height="3" fill="#fff" stroke="#4a78ee" stroke-width="1"/><rect x="986.5" y="212.5" width="3" height="3" fill="#fff" stroke="#4a78ee" stroke-width="1"/><rect x="989.5" y="213.5" width="3" height="3" fill="#fff" stroke="#4a78ee" stroke-width="1"/><rect x="992.5" y="214.5" width="3" height="3" fill="#fff" stroke="#4a78ee" stroke-width="1"/><rect x="995.5" y="215.5" width="3" height="3" fill="#fff" stroke="#4a78ee" stroke-width="1"/><rect x="998.5" y="216.5" width="3" height="3" fill="#fff" stroke="#4a78ee" stroke-width="1"/><rect x="1001.5" y="217.5" width="3" height="3" fill="#fff" stroke="#4a78ee" stroke-width="1"/><rect x="1004.5" y="218.5" width="3" height="3" fill="#fff" stroke="#4a78ee" stroke-width="1"/><rect x="1007.5" y="220.5" width="3" height="3" fill="#fff" stroke="#4a78ee" stroke-width="1"/><rect x="1010.5" y="221.5" width="3" height="3" fill="#fff" stroke="#4a78ee" stroke-width="1"/><rect x="1013.5" y="222.5" width="3" height="3" fill="#fff" stroke="#4a78ee" stroke-width="1"/><rect x="1016.5" y="223.5" width="3" height="3" fill="#fff" stroke="#4a78ee" stroke-width="1"/><rect x="1019.5" y="224.5" width="3" height="3" fill="#fff" stroke="#4a78ee" stroke-width="1"/><rect x="1022.5" y="225.5" width="3" height="3" fill="#fff" stroke="#4a78ee" stroke-width="1"/><rect x="1025.5" y="226.5" width="3" height="3" fill="#fff" stroke="#4a78ee" stroke-width="1"/><rect x="1028.5" y="227.5" width="3" height="3" fill="#fff" stroke="#4a78ee" stroke-width="1"/><rect x="1031.5" y="228.5" width="3" height="3" fill="#fff" stroke="#4a78ee" stroke-width="1"/><rect x="1034.5" y="229.5" width="3" height="3" fill="#fff" stroke="#4a78ee" stroke-width="1"/><rect x="958.5" y="228.5" width="3" height="3" fill="#fff" stroke="#4a78ee" stroke-width="1"/><rect x="962.5" y="229.5" width="3" height="3" fill="#fff" stroke="#4a78ee" stroke-width="1"/><rect x="965.5" y="229.5" width="3" height="3" fill="#fff" stroke="#4a78ee" stroke-width="1"/><rect x="968.5" y="230.5" width="3" height="3" fill="#fff" stroke="#4a78ee" stroke-width="1"/><rect x="972.5" y="231.5" width="3" height="3" fill="#fff" stroke="#4a78ee" stroke-width="1"/><rect x="975.5" y="231.5" width="3" height="3" fill="#fff" stroke="#4a78ee" stroke-width="1"/><rect x="978.5" y="232.5" width="3" height="3" fill="#fff" stroke="#4a78ee" stroke-width="1"/><rect x="982.5" y="233.5" width="3" height="3" fill="#fff" stroke="#4a78ee" stroke-width="1"/><rect x="985.5" y="233.5" width="3" height="3" fill="#fff" stroke="#4a78ee" stroke-width="1"/><rect x="988.5" y="234.5" width="3" height="3" fill="#fff" stroke="#4a78ee" stroke-width="1"/><rect x="992.5" y="235.5" width="3" height="3" fill="#fff" stroke="#4a78ee" stroke-width="1"/><rect x="995.5" y="235.5" width="3" height="3" fill="#fff" stroke="#4a78ee" stroke-width="1"/><rect x="998.5" y="236.5" width="3" height="3" fill="#fff" stroke="#4a78ee" stroke-width="1"/><rect x="1002.5" y="237.5" width="3" height="3" fill="#fff" stroke="#4a78ee" stroke-width="1"/><rect x="1005.5" y="237.5" width="3" height="3" fill="#fff" stroke="#4a78ee" stroke-width="1"/><rect x="1008.5" y="238.5" width="3" height="3" fill="#fff" stroke="#4a78ee" stroke-width="1"/><rect x="1012.5" y="239.5" width="3" height="3" fill="#fff" stroke="#4a78ee" stroke-width="1"/><rect x="1015.5" y="239.5" width="3" height="3" fill="#fff" stroke="#4a78ee" stroke-width="1"/><rect x="1018.5" y="240.5" width="3" height="3" fill="#fff" stroke="#4a78ee" stroke-width="1"/><rect x="1022.5" y="241.5" width="3" height="3" fill="#fff" stroke="#4a78ee" stroke-width="1"/><rect x="1025.5" y="242.5" width="3" height="3" fill="#fff" stroke="#4a78ee" stroke-width="1"/><rect x="942.5" y="250.5" width="3" height="3" fill="#fff" stroke="#4a78ee" stroke-width="1"/><rect x="945.5" y="251.5" width="3" height="3" fill="#fff" stroke="#4a78ee" stroke-width="1"/><rect x="948.5" y="251.5" width="3" height="3" fill="#fff" stroke="#4a78ee" stroke-width="1"/><rect x="951.5" y="252.5" width="3" height="3" fill="#fff" stroke="#4a78ee" stroke-width="1"/><rect x="955.5" y="253.5" width="3" height="3" fill="#fff" stroke="#4a78ee" stroke-width="1"/><rect x="958.5" y="254.5" width="3" height="3" fill="#fff" stroke="#4a78ee" stroke-width="1"/><rect x="961.5" y="255.5" width="3" height="3" fill="#fff" stroke="#4a78ee" stroke-width="1"/><rect x="964.5" y="255.5" width="3" height="3" fill="#fff" stroke="#4a78ee" stroke-width="1"/><rect x="967.5" y="256.5" width="3" height="3" fill="#fff" stroke="#4a78ee" stroke-width="1"/><rect x="970.5" y="257.5" width="3" height="3" fill="#fff" stroke="#4a78ee" stroke-width="1"/><rect x="974.5" y="258.5" width="3" height="3" fill="#fff" stroke="#4a78ee" stroke-width="1"/><rect x="977.5" y="258.5" width="3" height="3" fill="#fff" stroke="#4a78ee" stroke-width="1"/><rect x="980.5" y="259.5" width="3" height="3" fill="#fff" stroke="#4a78ee" stroke-width="1"/><rect x="983.5" y="260.5" width="3" height="3" fill="#fff" stroke="#4a78ee" stroke-width="1"/><rect x="986.5" y="261.5" width="3" height="3" fill="#fff" stroke="#4a78ee" stroke-width="1"/><rect x="990.5" y="262.5" width="3" height="3" fill="#fff" stroke="#4a78ee" stroke-width="1"/><rect x="993.5" y="262.5" width="3" height="3" fill="#fff" stroke="#4a78ee" stroke-width="1"/><rect x="996.5" y="263.5" width="3" height="3" fill="#fff" stroke="#4a78ee" stroke-width="1"/><rect x="999.5" y="264.5" width="3" height="3" fill="#fff" stroke="#4a78ee" stroke-width="1"/><rect x="1002.5" y="265.5" width="3" height="3" fill="#fff" stroke="#4a78ee" stroke-width="1"/><rect x="1005.5" y="266.5" width="3" height="3" fill="#fff" stroke="#4a78ee" stroke-width="1"/><rect x="924.5" y="268.5" width="3" height="3" fill="#fff" stroke="#4a78ee" stroke-width="1"/><rect x="926.5" y="270.5" width="3" height="3" fill="#fff" stroke="#4a78ee" stroke-width="1"/><rect x="928.5" y="272.5" width="3" height="3" fill="#fff" stroke="#4a78ee" stroke-width="1"/><rect x="931.5" y="274.5" width="3" height="3" fill="#fff" stroke="#4a78ee" stroke-width="1"/><rect x="933.5" y="276.5" width="3" height="3" fill="#fff" stroke="#4a78ee" stroke-width="1"/><rect x="935.5" y="278.5" width="3" height="3" fill="#fff" stroke="#4a78ee" stroke-width="1"/><rect x="937.5" y="280.5" width="3" height="3" fill="#fff" stroke="#4a78ee" stroke-width="1"/><rect x="939.5" y="282.5" width="3" height="3" fill="#fff" stroke="#4a78ee" stroke-width="1"/><rect x="941.5" y="284.5" width="3" height="3" fill="#fff" stroke="#4a78ee" stroke-width="1"/><rect x="944.5" y="286.5" width="3" height="3" fill="#fff" stroke="#4a78ee" stroke-width="1"/><rect x="946.5" y="288.5" width="3" height="3" fill="#fff" stroke="#4a78ee" stroke-width="1"/><rect x="948.5" y="290.5" width="3" height="3" fill="#fff" stroke="#4a78ee" stroke-width="1"/><rect x="950.5" y="292.5" width="3" height="3" fill="#fff" stroke="#4a78ee" stroke-width="1"/><rect x="952.5" y="294.5" width="3" height="3" fill="#fff" stroke="#4a78ee" stroke-width="1"/><rect x="955.5" y="296.5" width="3" height="3" fill="#fff" stroke="#4a78ee" stroke-width="1"/><rect x="957.5" y="298.5" width="3" height="3" fill="#fff" stroke="#4a78ee" stroke-width="1"/><rect x="959.5" y="300.5" width="3" height="3" fill="#fff" stroke="#4a78ee" stroke-width="1"/><rect x="961.5" y="303.5" width="3" height="3" fill="#fff" stroke="#4a78ee" stroke-width="1"/><rect x="963.5" y="305.5" width="3" height="3" fill="#fff" stroke="#4a78ee" stroke-width="1"/><rect x="966.5" y="307.5" width="3" height="3" fill="#fff" stroke="#4a78ee" stroke-width="1"/><rect x="968.5" y="309.5" width="3" height="3" fill="#fff" stroke="#4a78ee" stroke-width="1"/><rect x="922.5" y="270.5" width="3" height="3" fill="#fff" stroke="#4a78ee" stroke-width="1"/><rect x="924.5" y="272.5" width="3" height="3" fill="#fff" stroke="#4a78ee" stroke-width="1"/><rect x="926.5" y="274.5" width="3" height="3" fill="#fff" stroke="#4a78ee" stroke-width="1"/><rect x="928.5" y="276.5" width="3" height="3" fill="#fff" stroke="#4a78ee" stroke-width="1"/><rect x="930.5" y="278.5" width="3" height="3" fill="#fff" stroke="#4a78ee" stroke-width="1"/><rect x="932.5" y="280.5" width="3" height="3" fill="#fff" stroke="#4a78ee" stroke-width="1"/><rect x="934.5" y="282.5" width="3" height="3" fill="#fff" stroke="#4a78ee" stroke-width="1"/><rect x="937.5" y="284.5" width="3" height="3" fill="#fff" stroke="#4a78ee" stroke-width="1"/><rect x="939.5" y="286.5" width="3" height="3" fill="#fff" stroke="#4a78ee" stroke-width="1"/><rect x="941.5" y="288.5" width="3" height="3" fill="#fff" stroke="#4a78ee" stroke-width="1"/><rect x="943.5" y="290.5" width="3" height="3" fill="#fff" stroke="#4a78ee" stroke-width="1"/><rect x="945.5" y="292.5" width="3" height="3" fill="#fff" stroke="#4a78ee" stroke-width="1"/><rect x="947.5" y="294.5" width="3" height="3" fill="#fff" stroke="#4a78ee" stroke-width="1"/><rect x="949.5" y="296.5" width="3" height="3" fill="#fff" stroke="#4a78ee" stroke-width="1"/><rect x="952.5" y="298.5" width="3" height="3" fill="#fff" stroke="#4a78ee" stroke-width="1"/><rect x="954.5" y="300.5" width="3" height="3" fill="#fff" stroke="#4a78ee" stroke-width="1"/><rect x="956.5" y="302.5" width="3" height="3" fill="#fff" stroke="#4a78ee" stroke-width="1"/><rect x="958.5" y="304.5" width="3" height="3" fill="#fff" stroke="#4a78ee" stroke-width="1"/><rect x="960.5" y="306.5" width="3" height="3" fill="#fff" stroke="#4a78ee" stroke-width="1"/><rect x="962.5" y="308.5" width="3" height="3" fill="#fff" stroke="#4a78ee" stroke-width="1"/><rect x="964.5" y="310.5" width="3" height="3" fill="#fff" stroke="#4a78ee" stroke-width="1"/><rect x="973.5" y="277.5" width="3" height="3" fill="#fff" stroke="#4a78ee" stroke-width="1"/><rect x="977.5" y="280.5" width="3" height="3" fill="#fff" stroke="#4a78ee" stroke-width="1"/><rect x="980.5" y="282.5" width="3" height="3" fill="#fff" stroke="#4a78ee" stroke-width="1"/><rect x="984.5" y="285.5" width="3" height="3" fill="#fff" stroke="#4a78ee" stroke-width="1"/><rect x="988.5" y="287.5" width="3" height="3" fill="#fff" stroke="#4a78ee" stroke-width="1"/><rect x="967.5" y="294.5" width="3" height="3" fill="#fff" stroke="#4a78ee" stroke-width="1"/><rect x="971.5" y="295.5" width="3" height="3" fill="#fff" stroke="#4a78ee" stroke-width="1"/><rect x="975.5" y="297.5" width="3" height="3" fill="#fff" stroke="#4a78ee" stroke-width="1"/><rect x="979.5" y="299.5" width="3" height="3" fill="#fff" stroke="#4a78ee" stroke-width="1"/><rect x="941.5" y="248.5" width="3" height="3" fill="#fff" stroke="#4a78ee" stroke-width="1"/><rect x="945.5" y="251.5" width="3" height="3" fill="#fff" stroke="#4a78ee" stroke-width="1"/><rect x="949.5" y="255.5" width="3" height="3" fill="#fff" stroke="#4a78ee" stroke-width="1"/><rect x="953.5" y="258.5" width="3" height="3" fill="#fff" stroke="#4a78ee" stroke-width="1"/><rect x="884.5" y="311.5" width="3" height="3" fill="#fff" stroke="#4a78ee" stroke-width="1"/><rect x="887.5" y="313.5" width="3" height="3" fill="#fff" stroke="#4a78ee" stroke-width="1"/><rect x="889.5" y="315.5" width="3" height="3" fill="#fff" stroke="#4a78ee" stroke-width="1"/><rect x="891.5" y="316.5" width="3" height="3" fill="#fff" stroke="#4a78ee" stroke-width="1"/><rect x="893.5" y="318.5" width="3" height="3" fill="#fff" stroke="#4a78ee" stroke-width="1"/><rect x="896.5" y="320.5" width="3" height="3" fill="#fff" stroke="#4a78ee" stroke-width="1"/><rect x="898.5" y="322.5" width="3" height="3" fill="#fff" stroke="#4a78ee" stroke-width="1"/><rect x="900.5" y="324.5" width="3" height="3" fill="#fff" stroke="#4a78ee" stroke-width="1"/><rect x="903.5" y="326.5" width="3" height="3" fill="#fff" stroke="#4a78ee" stroke-width="1"/><rect x="905.5" y="328.5" width="3" height="3" fill="#fff" stroke="#4a78ee" stroke-width="1"/><rect x="907.5" y="330.5" width="3" height="3" fill="#fff" stroke="#4a78ee" stroke-width="1"/><rect x="909.5" y="331.5" width="3" height="3" fill="#fff" stroke="#4a78ee" stroke-width="1"/><rect x="912.5" y="333.5" width="3" height="3" fill="#fff" stroke="#4a78ee" stroke-width="1"/><rect x="914.5" y="335.5" width="3" height="3" fill="#fff" stroke="#4a78ee" stroke-width="1"/><rect x="916.5" y="337.5" width="3" height="3" fill="#fff" stroke="#4a78ee" stroke-width="1"/><rect x="919.5" y="339.5" width="3" height="3" fill="#fff" stroke="#4a78ee" stroke-width="1"/><rect x="921.5" y="341.5" width="3" height="3" fill="#fff" stroke="#4a78ee" stroke-width="1"/><rect x="923.5" y="343.5" width="3" height="3" fill="#fff" stroke="#4a78ee" stroke-width="1"/><rect x="925.5" y="345.5" width="3" height="3" fill="#fff" stroke="#4a78ee" stroke-width="1"/><rect x="928.5" y="346.5" width="3" height="3" fill="#fff" stroke="#4a78ee" stroke-width="1"/><rect x="930.5" y="348.5" width="3" height="3" fill="#fff" stroke="#4a78ee" stroke-width="1"/><rect x="715.5" y="492.5" width="3" height="3" fill="#fff" stroke="#4a78ee" stroke-width="1"/><rect x="719.5" y="492.5" width="3" height="3" fill="#fff" stroke="#4a78ee" stroke-width="1"/><rect x="723.5" y="492.5" width="3" height="3" fill="#fff" stroke="#4a78ee" stroke-width="1"/><rect x="728.5" y="492.5" width="3" height="3" fill="#fff" stroke="#4a78ee" stroke-width="1"/><rect x="732.5" y="492.5" width="3" height="3" fill="#fff" stroke="#4a78ee" stroke-width="1"/><rect x="736.5" y="492.5" width="3" height="3" fill="#fff" stroke="#4a78ee" stroke-width="1"/><rect x="740.5" y="492.5" width="3" height="3" fill="#fff" stroke="#4a78ee" stroke-width="1"/><rect x="744.5" y="492.5" width="3" height="3" fill="#fff" stroke="#4a78ee" stroke-width="1"/><rect x="748.5" y="492.5" width="3" height="3" fill="#fff" stroke="#4a78ee" stroke-width="1"/><rect x="753.5" y="492.5" width="3" height="3" fill="#fff" stroke="#4a78ee" stroke-width="1"/><rect x="757.5" y="492.5" width="3" height="3" fill="#fff" stroke="#4a78ee" stroke-width="1"/><rect x="761.5" y="492.5" width="3" height="3" fill="#fff" stroke="#4a78ee" stroke-width="1"/><rect x="765.5" y="492.5" width="3" height="3" fill="#fff" stroke="#4a78ee" stroke-width="1"/><rect x="769.5" y="492.5" width="3" height="3" fill="#fff" stroke="#4a78ee" stroke-width="1"/><rect x="774.5" y="492.5" width="3" height="3" fill="#fff" stroke="#4a78ee" stroke-width="1"/><rect x="778.5" y="492.5" width="3" height="3" fill="#fff" stroke="#4a78ee" stroke-width="1"/><rect x="782.5" y="492.5" width="3" height="3" fill="#fff" stroke="#4a78ee" stroke-width="1"/><rect x="786.5" y="492.5" width="3" height="3" fill="#fff" stroke="#4a78ee" stroke-width="1"/><rect x="790.5" y="492.5" width="3" height="3" fill="#fff" stroke="#4a78ee" stroke-width="1"/><rect x="795.5" y="492.5" width="3" height="3" fill="#fff" stroke="#4a78ee" stroke-width="1"/><rect x="799.5" y="492.5" width="3" height="3" fill="#fff" stroke="#4a78ee" stroke-width="1"/><rect x="932.5" y="735.5" width="3" height="3" fill="#fff" stroke="#4a78ee" stroke-width="1"/><rect x="934.5" y="733.5" width="3" height="3" fill="#fff" stroke="#4a78ee" stroke-width="1"/><rect x="936.5" y="731.5" width="3" height="3" fill="#fff" stroke="#4a78ee" stroke-width="1"/><rect x="939.5" y="729.5" width="3" height="3" fill="#fff" stroke="#4a78ee" stroke-width="1"/><rect x="941.5" y="727.5" width="3" height="3" fill="#fff" stroke="#4a78ee" stroke-width="1"/><rect x="943.5" y="725.5" width="3" height="3" fill="#fff" stroke="#4a78ee" stroke-width="1"/><rect x="946.5" y="723.5" width="3" height="3" fill="#fff" stroke="#4a78ee" stroke-width="1"/><rect x="948.5" y="721.5" width="3" height="3" fill="#fff" stroke="#4a78ee" stroke-width="1"/><rect x="950.5" y="719.5" width="3" height="3" fill="#fff" stroke="#4a78ee" stroke-width="1"/><rect x="951.6" y="715.9" width="5.2" height="5.2" fill="#4a78ee"/><rect x="953.9" y="713.9" width="5.2" height="5.2" fill="#4a78ee"/><rect x="956.1" y="711.9" width="5.2" height="5.2" fill="#4a78ee"/><rect x="958.4" y="709.8" width="5.2" height="5.2" fill="#4a78ee"/><rect x="960.6" y="707.8" width="5.2" height="5.2" fill="#4a78ee"/><rect x="962.9" y="705.7" width="5.2" height="5.2" fill="#4a78ee"/><rect x="965.1" y="703.6" width="5.2" height="5.2" fill="#4a78ee"/><rect x="967.4" y="701.6" width="5.2" height="5.2" fill="#4a78ee"/><rect x="969.6" y="699.6" width="5.2" height="5.2" fill="#4a78ee"/><rect x="971.9" y="697.5" width="5.2" height="5.2" fill="#4a78ee"/><rect x="974.1" y="695.4" width="5.2" height="5.2" fill="#4a78ee"/><rect x="976.4" y="693.4" width="5.2" height="5.2" fill="#4a78ee"/></svg>
<!-- p_popup -->
<div class="a" style="left:155px;top:27px;width:271px;height:758px;background:#f0f0f0;box-shadow:2px 2px 4px rgba(0,0,0,0.45);border:1px solid #9a9a9a;box-sizing:border-box;border-top:none;"></div>
<div class="a" style="left:185px;top:29px;width:1px;height:753px;background:#e2e2e2;"></div>
<div class="a" style="left:186px;top:29px;width:1px;height:753px;background:#fafafa;"></div>
<div class="t" style="left:190px;top:35px;color:#000;font-size:12px;">变换(T)</div>
<svg class="a" style="left:409px;top:36px;" width="5" height="9" viewBox="0 0 5 9"><path d="M0.5 0.5 L4.5 4.5 L0.5 8.5 Z" fill="#111"/></svg>
<div class="t" style="left:190px;top:57px;color:#000;font-size:12px;">排列(A)</div>
<svg class="a" style="left:409px;top:58px;" width="5" height="9" viewBox="0 0 5 9"><path d="M0.5 0.5 L4.5 4.5 L0.5 8.5 Z" fill="#111"/></svg>
<div class="a" style="left:186px;top:78px;width:238px;height:1px;background:#d7d7d7;"></div>
<div class="a" style="left:186px;top:79px;width:238px;height:1px;background:#fbfbfb;"></div>
<div class="t" style="left:190px;top:87px;color:#000;font-size:12px;">编组(G)</div>
<div class="t" style="left:0px;top:87px;color:#000;font-size:12px;left:auto;right:1346px;letter-spacing:0.5px;">Ctrl+G</div>
<div class="t" style="left:190px;top:109px;color:#6d6d6d;font-size:12px;">取消编组(U)</div>
<div class="t" style="left:0px;top:109px;color:#6d6d6d;font-size:12px;left:auto;right:1346px;letter-spacing:0.5px;">Shift+Ctrl+G</div>
<div class="t" style="left:190px;top:131px;color:#000;font-size:12px;">锁定(L)</div>
<svg class="a" style="left:409px;top:132px;" width="5" height="9" viewBox="0 0 5 9"><path d="M0.5 0.5 L4.5 4.5 L0.5 8.5 Z" fill="#111"/></svg>
<div class="t" style="left:190px;top:153px;color:#6d6d6d;font-size:12px;">全部解锁(K)</div>
<div class="t" style="left:0px;top:153px;color:#6d6d6d;font-size:12px;left:auto;right:1346px;letter-spacing:0.5px;">Alt+Ctrl+2</div>
<div class="t" style="left:190px;top:175px;color:#000;font-size:12px;">隐藏(H)</div>
<svg class="a" style="left:409px;top:176px;" width="5" height="9" viewBox="0 0 5 9"><path d="M0.5 0.5 L4.5 4.5 L0.5 8.5 Z" fill="#111"/></svg>
<div class="t" style="left:190px;top:197px;color:#6d6d6d;font-size:12px;">显示全部</div>
<div class="t" style="left:0px;top:197px;color:#6d6d6d;font-size:12px;left:auto;right:1346px;letter-spacing:0.5px;">Alt+Ctrl+3</div>
<div class="a" style="left:158px;top:221px;width:264px;height:23px;background:linear-gradient(#f1f5fb,#dde8f7);border:1px solid #aecff7;border-radius:3px;box-sizing:border-box;"></div>
<div class="a" style="left:156px;top:216px;width:267px;height:34px;border:1px solid #d0202a;box-sizing:border-box;"></div>
<div class="t" style="left:190px;top:227px;color:#000;font-size:12px;">扩展(X)...</div>
<div class="t" style="left:190px;top:249px;color:#6d6d6d;font-size:12px;">扩展外观(E)</div>
<div class="t" style="left:190px;top:271px;color:#6d6d6d;font-size:12px;">裁剪图像(C)</div>
<div class="t" style="left:190px;top:293px;color:#000;font-size:12px;">栅格化(Z)...</div>
<div class="t" style="left:190px;top:315px;color:#000;font-size:12px;">创建渐变网格(D)...</div>
<div class="t" style="left:190px;top:337px;color:#6d6d6d;font-size:12px;">创建对象马赛克(J)...</div>
<div class="t" style="left:190px;top:359px;color:#000;font-size:12px;">拼合透明度(F)...</div>
<div class="a" style="left:186px;top:380px;width:238px;height:1px;background:#d7d7d7;"></div>
<div class="a" style="left:186px;top:381px;width:238px;height:1px;background:#fbfbfb;"></div>
<div class="t" style="left:190px;top:389px;color:#6d6d6d;font-size:12px;">设为像素级优化(M)</div>
<div class="a" style="left:186px;top:410px;width:238px;height:1px;background:#d7d7d7;"></div>
<div class="a" style="left:186px;top:411px;width:238px;height:1px;background:#fbfbfb;"></div>
<div class="t" style="left:190px;top:419px;color:#000;font-size:12px;">切片(S)</div>
<svg class="a" style="left:409px;top:420px;" width="5" height="9" viewBox="0 0 5 9"><path d="M0.5 0.5 L4.5 4.5 L0.5 8.5 Z" fill="#111"/></svg>
<div class="t" style="left:190px;top:441px;color:#000;font-size:12px;">创建裁切标记(C)</div>
<div class="a" style="left:186px;top:462px;width:238px;height:1px;background:#d7d7d7;"></div>
<div class="a" style="left:186px;top:463px;width:238px;height:1px;background:#fbfbfb;"></div>
<div class="t" style="left:190px;top:471px;color:#000;font-size:12px;">路径(P)</div>
<svg class="a" style="left:409px;top:472px;" width="5" height="9" viewBox="0 0 5 9"><path d="M0.5 0.5 L4.5 4.5 L0.5 8.5 Z" fill="#111"/></svg>
<div class="t" style="left:190px;top:493px;color:#000;font-size:12px;">形状(P)</div>
<svg class="a" style="left:409px;top:494px;" width="5" height="9" viewBox="0 0 5 9"><path d="M0.5 0.5 L4.5 4.5 L0.5 8.5 Z" fill="#111"/></svg>
<div class="t" style="left:190px;top:515px;color:#000;font-size:12px;">图案(E)</div>
<svg class="a" style="left:409px;top:516px;" width="5" height="9" viewBox="0 0 5 9"><path d="M0.5 0.5 L4.5 4.5 L0.5 8.5 Z" fill="#111"/></svg>
<div class="t" style="left:190px;top:537px;color:#000;font-size:12px;">混合(B)</div>
<svg class="a" style="left:409px;top:538px;" width="5" height="9" viewBox="0 0 5 9"><path d="M0.5 0.5 L4.5 4.5 L0.5 8.5 Z" fill="#111"/></svg>
<div class="t" style="left:190px;top:559px;color:#000;font-size:12px;">封套扭曲(V)</div>
<svg class="a" style="left:409px;top:560px;" width="5" height="9" viewBox="0 0 5 9"><path d="M0.5 0.5 L4.5 4.5 L0.5 8.5 Z" fill="#111"/></svg>
<div class="t" style="left:190px;top:581px;color:#000;font-size:12px;">透视(P)</div>
<svg class="a" style="left:409px;top:582px;" width="5" height="9" viewBox="0 0 5 9"><path d="M0.5 0.5 L4.5 4.5 L0.5 8.5 Z" fill="#111"/></svg>
<div class="t" style="left:190px;top:603px;color:#000;font-size:12px;">实时上色(N)</div>
<svg class="a" style="left:409px;top:604px;" width="5" height="9" viewBox="0 0 5 9"><path d="M0.5 0.5 L4.5 4.5 L0.5 8.5 Z" fill="#111"/></svg>
<div class="t" style="left:190px;top:625px;color:#000;font-size:12px;">图像描摹</div>
<svg class="a" style="left:409px;top:626px;" width="5" height="9" viewBox="0 0 5 9"><path d="M0.5 0.5 L4.5 4.5 L0.5 8.5 Z" fill="#111"/></svg>
<div class="t" style="left:190px;top:647px;color:#000;font-size:12px;">文本绕排(W)</div>
<svg class="a" style="left:409px;top:648px;" width="5" height="9" viewBox="0 0 5 9"><path d="M0.5 0.5 L4.5 4.5 L0.5 8.5 Z" fill="#111"/></svg>
<div class="t" style="left:190px;top:669px;color:#000;font-size:12px;"><span style="letter-spacing:0.35px">Line 和 Sketch 图稿</span></div>
<svg class="a" style="left:409px;top:670px;" width="5" height="9" viewBox="0 0 5 9"><path d="M0.5 0.5 L4.5 4.5 L0.5 8.5 Z" fill="#111"/></svg>
<div class="a" style="left:186px;top:690px;width:238px;height:1px;background:#d7d7d7;"></div>
<div class="a" style="left:186px;top:691px;width:238px;height:1px;background:#fbfbfb;"></div>
<div class="t" style="left:190px;top:699px;color:#000;font-size:12px;">剪切蒙版(M)</div>
<svg class="a" style="left:409px;top:700px;" width="5" height="9" viewBox="0 0 5 9"><path d="M0.5 0.5 L4.5 4.5 L0.5 8.5 Z" fill="#111"/></svg>
<div class="t" style="left:190px;top:721px;color:#000;font-size:12px;">复合路径(O)</div>
<svg class="a" style="left:409px;top:722px;" width="5" height="9" viewBox="0 0 5 9"><path d="M0.5 0.5 L4.5 4.5 L0.5 8.5 Z" fill="#111"/></svg>
<div class="t" style="left:190px;top:743px;color:#000;font-size:12px;">画板(A)</div>
<svg class="a" style="left:409px;top:744px;" width="5" height="9" viewBox="0 0 5 9"><path d="M0.5 0.5 L4.5 4.5 L0.5 8.5 Z" fill="#111"/></svg>
<div class="t" style="left:190px;top:765px;color:#000;font-size:12px;">图表(R)</div>
<svg class="a" style="left:409px;top:766px;" width="5" height="9" viewBox="0 0 5 9"><path d="M0.5 0.5 L4.5 4.5 L0.5 8.5 Z" fill="#111"/></svg>
<div class="a" style="left:152px;top:4px;width:75px;height:31px;border:1px solid #c8323c;box-sizing:border-box;"></div>
<!-- p_float -->
<div class="a" style="left:1228px;top:147px;width:232px;height:138px;background:#535353;box-shadow:1px 2px 4px rgba(0,0,0,0.45);border:1px solid #3c3c3c;box-sizing:border-box;"></div>
<div class="a" style="left:1229px;top:148px;width:230px;height:30px;background:#424242;"></div>
<div class="a" style="left:1229px;top:151px;width:43px;height:27px;background:#4a4a4a;"></div>
<div class="t" style="left:1238px;top:160px;color:#a8a8a8;font-size:12px;">对齐</div>
<div class="a" style="left:1272px;top:151px;width:79px;height:27px;background:#535353;"></div>
<div class="t" style="left:1282px;top:160px;color:#f0f0f0;font-size:12px;">路径查找器</div>
<svg class="a" style="left:1418px;top:161px;" width="10" height="8" viewBox="0 0 10 8"><path d="M1 0.8 L4 4 L1 7.2 M5.5 0.8 L8.5 4 L5.5 7.2" stroke="#d8d8d8" stroke-width="1.4" fill="none"/></svg>
<div class="a" style="left:1435px;top:159px;width:1px;height:12px;background:#8a8a8a;"></div>
<svg class="a" style="left:1443px;top:161px;" width="11" height="8" viewBox="0 0 11 8"><path d="M0 0.5 H10.5 M0 2.5 H10.5 M0 4.5 H10.5 M0 6.5 H10.5" stroke="#c8c8c8" stroke-width="1"/></svg>
<div class="t" style="left:1234px;top:187px;color:#cfcfcf;font-size:12px;font-weight:500;">形状模式 :</div>
<div class="t" style="left:1234px;top:237px;color:#cfcfcf;font-size:12px;font-weight:500;">路径查找器 :</div>
<svg class="a" style="left:0;top:0" width="1460" height="285" viewBox="0 0 1460 285"><rect x="1240" y="209" width="9" height="9" fill="#cdcdcd"/><rect x="1245" y="214" width="9" height="9" fill="#cdcdcd"/><rect x="1276" y="209" width="9" height="9" fill="#cdcdcd"/><rect x="1281" y="214" width="9" height="9" fill="#535353" stroke="#cdcdcd" stroke-width="1.2"/><rect x="1312" y="209" width="9" height="9" fill="none" stroke="#cdcdcd" stroke-width="1.2"/><rect x="1317" y="214" width="9" height="9" fill="none" stroke="#cdcdcd" stroke-width="1.2"/><rect x="1317" y="214" width="4.5" height="4.5" fill="#cdcdcd"/><rect x="1348.5" y="209" width="9" height="9" fill="#cdcdcd"/><rect x="1353.5" y="214" width="9" height="9" fill="#cdcdcd"/><rect x="1354.0" y="214.5" width="3.5" height="3.5" fill="#535353"/><rect x="1243" y="259.5" width="9" height="9" fill="none" stroke="#cdcdcd" stroke-width="1.3"/><rect x="1248" y="264.5" width="9" height="9" fill="#cdcdcd" stroke="#cdcdcd" stroke-width="1.3"/><rect x="1246" y="262.5" width="6" height="6" fill="none" stroke="#cdcdcd" stroke-width="1"/><rect x="1280" y="259.5" width="9" height="9" fill="#535353" stroke="#cdcdcd" stroke-width="1.3"/><rect x="1285" y="264.5" width="9" height="9" fill="#cdcdcd"/><rect x="1316.5" y="259.5" width="9" height="9" fill="#cdcdcd"/><rect x="1321.5" y="264.5" width="9" height="9" fill="#cdcdcd" stroke="#535353" stroke-width="0.8"/><rect x="1354" y="259.5" width="9" height="9" fill="none" stroke="#8a8a8a" stroke-width="1"/><rect x="1359" y="264.5" width="9" height="9" fill="none" stroke="#8a8a8a" stroke-width="1"/><rect x="1358.5" y="264.0" width="5.5" height="5.5" fill="#cdcdcd"/><rect x="1391.5" y="259.5" width="9" height="9" fill="none" stroke="#cdcdcd" stroke-width="1"/><rect x="1396.5" y="264.5" width="9" height="9" fill="none" stroke="#cdcdcd" stroke-width="1"/><rect x="1429.5" y="259.5" width="9" height="9" fill="#535353" stroke="#cdcdcd" stroke-width="1.3"/><rect x="1434.5" y="264.5" width="9" height="9" fill="#cdcdcd"/><rect x="1434.5" y="264.5" width="4.5" height="4.5" fill="#535353"/></svg>
<div class="a" style="left:1380px;top:206px;width:74px;height:20px;background:#5a5a5a;border-radius:2px;"></div>
<div class="t" style="left:1405px;top:211px;color:#727272;font-size:12px;">扩展</div>
<!-- p_right -->
<svg class="a" style="left:1484px;top:71px;" width="10" height="7" viewBox="0 0 10 7"><path d="M4 0.5 L1 3.5 L4 6.5 Z M8.5 0.5 L5.5 3.5 L8.5 6.5 Z" fill="#d8d8d8"/></svg>
<svg class="a" style="left:1731px;top:71px;" width="10" height="7" viewBox="0 0 10 7"><path d="M1 0.5 L4 3.5 L1 6.5 Z M5.5 0.5 L8.5 3.5 L5.5 6.5 Z" fill="#d8d8d8"/></svg>
<div class="a" style="left:1472px;top:84px;width:17px;height:4px;background:repeating-linear-gradient(90deg,#3c3c3c 0 1px,transparent 1px 2px);"></div>
<div class="a" style="left:1472px;top:153px;width:17px;height:4px;background:repeating-linear-gradient(90deg,#3c3c3c 0 1px,transparent 1px 2px);"></div>
<div class="a" style="left:1472px;top:223px;width:17px;height:4px;background:repeating-linear-gradient(90deg,#3c3c3c 0 1px,transparent 1px 2px);"></div>
<div class="a" style="left:1472px;top:292px;width:17px;height:4px;background:repeating-linear-gradient(90deg,#3c3c3c 0 1px,transparent 1px 2px);"></div>
<div class="a" style="left:1472px;top:361px;width:17px;height:4px;background:repeating-linear-gradient(90deg,#3c3c3c 0 1px,transparent 1px 2px);"></div>
<div class="a" style="left:1472px;top:400px;width:17px;height:4px;background:repeating-linear-gradient(90deg,#3c3c3c 0 1px,transparent 1px 2px);"></div>
<div class="a" style="left:1460px;top:148px;width:38px;height:1px;background:#424242;"></div>
<div class="a" style="left:1460px;top:218px;width:38px;height:1px;background:#424242;"></div>
<div class="a" style="left:1460px;top:287px;width:38px;height:1px;background:#424242;"></div>
<div class="a" style="left:1460px;top:357px;width:38px;height:1px;background:#424242;"></div>
<div class="a" style="left:1460px;top:396px;width:38px;height:1px;background:#424242;"></div>
<div class="a" style="left:1460px;top:438px;width:38px;height:1px;background:#424242;"></div>
<svg class="a" style="left:0;top:0" width="1500" height="440" viewBox="0 0 1500 440"><circle cx="1480" cy="104.5" r="6.3" fill="#cdcdcd"/><circle cx="1480" cy="104.5" r="8.3" fill="none" stroke="#cdcdcd" stroke-width="1.2" stroke-dasharray="2.4 1.6"/><defs><linearGradient id="dq" x1="0" x2="1" y1="1" y2="0"><stop offset="0" stop-color="#777"/><stop offset="1" stop-color="#e0e0e0"/></linearGradient></defs><path d="M1472.5 125 C1482 125.5 1488 131 1488.5 140 H1472.5 Z" fill="url(#dq)" stroke="#cdcdcd" stroke-width="1"/><rect x="1472" y="164" width="1.3" height="18" fill="#cdcdcd"/><rect x="1475" y="166.5" width="8" height="5" fill="#cdcdcd"/><rect x="1475" y="174.5" width="13" height="5" fill="#cdcdcd"/><rect x="1466" y="191" width="27" height="21" rx="2" fill="#353535"/><rect x="1473" y="194" width="9" height="9" fill="#cdcdcd"/><rect x="1478" y="199.5" width="9.5" height="9.5" fill="#cdcdcd" stroke="#353535" stroke-width="1"/><rect x="1479" y="195" width="6" height="6" fill="none" stroke="#cdcdcd" stroke-width="1"/><path d="M1475 243 H1486 L1485 252 H1476 Z" fill="#cdcdcd"/><path d="M1480.5 243 V233 M1477 243 L1474.5 236 M1484 243 L1487 237" stroke="#cdcdcd" stroke-width="1.6"/><circle cx="1480.5" cy="234" r="2" fill="#cdcdcd"/><circle cx="1474.5" cy="237" r="1.8" fill="#cdcdcd"/><path d="M1485.5 236 l3 -1 l0.5 3z" fill="#cdcdcd"/><circle cx="1480.5" cy="265" r="4.2" fill="#cdcdcd"/><circle cx="1476" cy="271" r="4.2" fill="#cdcdcd"/><circle cx="1485" cy="271" r="4.2" fill="#cdcdcd"/><path d="M1480.5 270 L1483.5 279 H1477.5 Z" fill="#cdcdcd"/><rect x="1472.5" y="311.5" width="5" height="5" fill="none" stroke="#cdcdcd" stroke-width="1.2"/><rect x="1475.5" y="314.5" width="5" height="5" fill="#535353" stroke="#cdcdcd" stroke-width="1.2"/><rect x="1472.5" y="339.5" width="5" height="5" fill="none" stroke="#cdcdcd" stroke-width="1.2"/><rect x="1475.5" y="342.5" width="5" height="5" fill="#535353" stroke="#cdcdcd" stroke-width="1.2"/><path d="M1480 412.5 H1473 V428.5 H1488.5 V421" fill="none" stroke="#cdcdcd" stroke-width="1.6"/><path d="M1478.5 422.5 L1488 413 M1482.5 412.2 H1489 V418.5" fill="none" stroke="#cdcdcd" stroke-width="1.6"/></svg>
<div class="t" style="left:1479px;top:301px;color:#cdcdcd;font-size:17px;font-weight:bold;">A</div>
<div class="t" style="left:1481px;top:330px;color:#cdcdcd;font-size:16px;font-weight:bold;">¶</div>
<div class="t" style="left:1472px;top:370px;color:#cdcdcd;font-size:22px;font-family:'Liberation Serif',serif;font-style:italic;font-weight:bold;">A</div>
<div class="a" style="left:1500px;top:80px;width:245px;height:218px;background:#535353;"></div>
<div class="a" style="left:1500px;top:80px;width:245px;height:28px;background:#424242;"></div>
<div class="a" style="left:1501px;top:81px;width:42px;height:27px;background:#4a4a4a;"></div>
<div class="t" style="left:1511px;top:90px;color:#a6a6a6;font-size:12px;">画板</div>
<div class="a" style="left:1544px;top:81px;width:42px;height:27px;background:#4a4a4a;"></div>
<div class="t" style="left:1553px;top:90px;color:#a6a6a6;font-size:12px;">链接</div>
<div class="a" style="left:1587px;top:81px;width:42px;height:27px;background:#535353;"></div>
<div class="t" style="left:1596px;top:90px;color:#f0f0f0;font-size:12px;">图层</div>
<svg class="a" style="left:1730px;top:91px;" width="11" height="8" viewBox="0 0 11 8"><path d="M0 0.5 H10.5 M0 2.5 H10.5 M0 4.5 H10.5 M0 6.5 H10.5" stroke="#c8c8c8" stroke-width="1"/></svg>
<div class="a" style="left:1506px;top:113px;width:235px;height:167px;border:1px solid #484848;box-sizing:border-box;"></div>
<div class="a" style="left:1507px;top:114px;width:233px;height:22px;background:#4b617f;"></div>
<div class="a" style="left:1550px;top:114px;width:3px;height:22px;background:#5a85ee;"></div>
<svg class="a" style="left:1510px;top:119px;" width="14" height="10" viewBox="0 0 14 10"><path d="M0.5 5 C3 0.8 10.5 0.8 13 5 C10.5 9.2 3 9.2 0.5 5 Z" fill="#e8e8e8"/><circle cx="6.75" cy="5" r="2.3" fill="#4b617f"/><circle cx="6.75" cy="5" r="1" fill="#e8e8e8"/></svg>
<svg class="a" style="left:1561px;top:120px;" width="7" height="11" viewBox="0 0 7 11"><path d="M1.2 1 L5.2 5.5 L1.2 10" stroke="#f0f0f0" stroke-width="1.6" fill="none"/></svg>
<div class="a" style="left:1579px;top:116px;width:18px;height:18px;background:#fff;border:1px solid #000;box-sizing:border-box;"></div>
<svg class="a" style="left:1580px;top:117px;" width="16" height="16" viewBox="0 0 16 16"><path d="M3 5 H7 M5 5 V8 M12 3.5 L9.5 8 L12.5 12.5" stroke="#000" stroke-width="1.8" fill="none"/></svg>
<div class="t" style="left:1603px;top:119px;color:#f4f4f4;font-size:12px;">图层 1</div>
<svg class="a" style="left:1710px;top:120px;" width="10" height="10" viewBox="0 0 10 10"><circle cx="5" cy="5" r="3.8" fill="none" stroke="#e8e8e8" stroke-width="1.2"/></svg>
<div class="a" style="left:1725px;top:122px;width:7px;height:7px;background:#4c68cc;border:1px solid #14145a;box-sizing:border-box;"></div>
<svg class="a" style="left:1734px;top:114px;" width="6" height="6" viewBox="0 0 6 6"><path d="M0 0 H6 V6 Z" fill="#c8d0dc"/></svg>
<div class="t" style="left:1507px;top:285px;color:#d0d0d0;font-size:12px;font-weight:500;">1 个图层</div>
<svg class="a" style="left:1602px;top:282px;" width="14" height="14" viewBox="0 0 14 14"><circle cx="8" cy="5.5" r="4" fill="none" stroke="#cdcdcd" stroke-width="1.5"/><path d="M5 8.5 L1 13" stroke="#cdcdcd" stroke-width="2"/></svg>
<svg class="a" style="left:1628px;top:283px;" width="13" height="13" viewBox="0 0 13 13"><rect x="0.6" y="0.6" width="8" height="8" fill="none" stroke="#cdcdcd" stroke-width="1.2"/><rect x="4" y="4" width="8" height="8" fill="#8a8a8a" stroke="#cdcdcd" stroke-width="1.2"/></svg>
<svg class="a" style="left:1652px;top:283px;" width="16" height="13" viewBox="0 0 16 13"><path d="M1 1 V5 H4 M3 3 L5 5 L3 7" stroke="#cdcdcd" stroke-width="1.2" fill="none"/><path d="M7 3 H15 V12 H7 Z" fill="#cdcdcd"/></svg>
<svg class="a" style="left:1681px;top:283px;" width="12" height="13" viewBox="0 0 12 13"><path d="M1 1 H11 V12 H4.5 L1 8.5 Z" fill="#cdcdcd"/><path d="M1 8.5 H4.5 V12 Z" fill="#8e8e8e"/></svg>
<svg class="a" style="left:1706px;top:282px;" width="13" height="14" viewBox="0 0 13 14"><path d="M1 3 H12 M4.5 3 V1 H8.5 V3 M2.5 3 L3.2 13 H9.8 L10.5 3 M5 5.5 V11 M8 5.5 V11" stroke="#6a6a6a" stroke-width="1.1" fill="none"/></svg>
<!-- p_right2 -->
<div class="a" style="left:1500px;top:298px;width:245px;height:4px;background:#3e3e3e;"></div>
<div class="a" style="left:1500px;top:302px;width:245px;height:343px;background:#535353;"></div>
<div class="a" style="left:1500px;top:302px;width:245px;height:27px;background:#424242;"></div>
<div class="a" style="left:1500px;top:302px;width:49px;height:27px;background:#535353;"></div>
<div class="t" style="left:1517px;top:311px;color:#f0f0f0;font-size:12px;">描边</div>
<svg class="a" style="left:1505px;top:311px;" width="7" height="11" viewBox="0 0 7 11"><path d="M1 4 L3.5 1.2 L6 4 M1 7 L3.5 9.8 L6 7" stroke="#d0d0d0" stroke-width="1.1" fill="none"/></svg>
<div class="a" style="left:1550px;top:302px;width:40px;height:27px;background:#4a4a4a;"></div>
<div class="t" style="left:1558px;top:311px;color:#a6a6a6;font-size:12px;">色板</div>
<div class="a" style="left:1591px;top:302px;width:65px;height:27px;background:#4a4a4a;"></div>
<div class="t" style="left:1600px;top:311px;color:#a6a6a6;font-size:12px;">图形样式</div>
<svg class="a" style="left:1730px;top:312px;" width="11" height="8" viewBox="0 0 11 8"><path d="M0 0.5 H10.5 M0 2.5 H10.5 M0 4.5 H10.5 M0 6.5 H10.5" stroke="#c8c8c8" stroke-width="1"/></svg>
<div class="t" style="left:0px;top:341px;color:#d6d6d6;font-size:12px;left:auto;right:189px;font-weight:500;">粗细 :</div>
<div class="a" style="left:1567px;top:336px;width:87px;height:20px;background:#454545;border:1px solid #4b4b4b;box-sizing:border-box;border-radius:3px;"></div>
<div class="a" style="left:1583px;top:337px;width:1px;height:18px;background:#535353;"></div>
<div class="a" style="left:1635px;top:337px;width:1px;height:18px;background:#535353;"></div>
<svg class="a" style="left:1570px;top:339px;" width="11" height="14" viewBox="0 0 11 14"><path d="M1.5 5 L5.5 1.5 L9.5 5 M1.5 9 L5.5 12.5 L9.5 9" stroke="#dcdcdc" stroke-width="1.4" fill="none"/></svg>
<div class="t" style="left:1587px;top:341px;color:#f4f4f4;font-size:10px;font-family:'Liberation Mono',monospace;">1 pt</div>
<svg class="a" style="left:1640px;top:343px;" width="9" height="7" viewBox="0 0 9 7"><path d="M1 1.5 L4.5 5 L8 1.5" stroke="#e0e0e0" stroke-width="1.5" fill="none"/></svg>
<div class="t" style="left:0px;top:367px;color:#d6d6d6;font-size:12px;left:auto;right:189px;font-weight:500;">端点 :</div>
<div class="a" style="left:1567px;top:362px;width:66px;height:20px;border:1px solid #484848;box-sizing:border-box;border-radius:2px;"></div>
<div class="a" style="left:1567px;top:362px;width:22px;height:20px;background:#383838;border-radius:2px;"></div>
<div class="t" style="left:0px;top:394px;color:#d6d6d6;font-size:12px;left:auto;right:189px;font-weight:500;">边角 :</div>
<div class="a" style="left:1567px;top:389px;width:66px;height:20px;border:1px solid #484848;box-sizing:border-box;border-radius:2px;"></div>
<div class="a" style="left:1567px;top:389px;width:22px;height:20px;background:#383838;border-radius:2px;"></div>
<div class="t" style="left:0px;top:394px;color:#d6d6d6;font-size:12px;left:auto;right:62px;font-weight:500;">限制 :</div>
<div class="a" style="left:1694px;top:388px;width:38px;height:21px;background:#454545;border:1px solid #4b4b4b;box-sizing:border-box;border-radius:3px;"></div>
<div class="t" style="left:1698px;top:394px;color:#f4f4f4;font-size:10px;font-family:'Liberation Mono',monospace;">10</div>
<div class="t" style="left:1735px;top:397px;color:#a0a0a0;font-size:9px;font-weight:bold;">x</div>
<div class="t" style="left:0px;top:421px;color:#d6d6d6;font-size:12px;left:auto;right:189px;font-weight:500;">对齐描边 :</div>
<div class="a" style="left:1567px;top:416px;width:66px;height:20px;border:1px solid #484848;box-sizing:border-box;border-radius:2px;"></div>
<div class="a" style="left:1567px;top:416px;width:22px;height:20px;background:#383838;border-radius:2px;"></div>
<div class="a" style="left:1506px;top:443px;width:235px;height:1px;background:#484848;"></div>
<div class="a" style="left:1507px;top:454px;width:12px;height:12px;border:1px solid #c0c0c0;box-sizing:border-box;"></div>
<div class="t" style="left:1524px;top:455px;color:#f0f0f0;font-size:12px;font-weight:500;">虚线</div>
<div class="a" style="left:1665px;top:450px;width:76px;height:21px;border:1px solid #5e5e5e;box-sizing:border-box;"></div>
<div class="a" style="left:1702px;top:450px;width:1px;height:21px;background:#5e5e5e;"></div>
<div class="a" style="left:1507px;top:476px;width:36px;height:21px;background:#585858;border-radius:2px;"></div>
<div class="t" style="left:1513px;top:501px;color:#6b6b6b;font-size:12px;">虚线</div>
<div class="a" style="left:1546px;top:476px;width:36px;height:21px;background:#585858;border-radius:2px;"></div>
<div class="t" style="left:1552px;top:501px;color:#6b6b6b;font-size:12px;">间隙</div>
<div class="a" style="left:1586px;top:476px;width:36px;height:21px;background:#585858;border-radius:2px;"></div>
<div class="t" style="left:1592px;top:501px;color:#6b6b6b;font-size:12px;">虚线</div>
<div class="a" style="left:1625px;top:476px;width:36px;height:21px;background:#585858;border-radius:2px;"></div>
<div class="t" style="left:1631px;top:501px;color:#6b6b6b;font-size:12px;">间隙</div>
<div class="a" style="left:1664px;top:476px;width:36px;height:21px;background:#585858;border-radius:2px;"></div>
<div class="t" style="left:1670px;top:501px;color:#6b6b6b;font-size:12px;">虚线</div>
<div class="a" style="left:1704px;top:476px;width:36px;height:21px;background:#585858;border-radius:2px;"></div>
<div class="t" style="left:1710px;top:501px;color:#6b6b6b;font-size:12px;">间隙</div>
<div class="a" style="left:1506px;top:517px;width:235px;height:1px;background:#484848;"></div>
<div class="t" style="left:0px;top:531px;color:#d6d6d6;font-size:12px;left:auto;right:189px;font-weight:500;">箭头 :</div>
<div class="a" style="left:1567px;top:525px;width:56px;height:20px;background:#454545;border:1px solid #4b4b4b;box-sizing:border-box;border-radius:2px;"></div>
<div class="a" style="left:1567px;top:525px;width:37px;height:20px;background:#e2e2e2;"></div>
<div class="a" style="left:1572px;top:534px;width:27px;height:2px;background:#000;"></div>
<svg class="a" style="left:1609px;top:532px;" width="9" height="7" viewBox="0 0 9 7"><path d="M1 1.5 L4.5 5 L8 1.5" stroke="#e0e0e0" stroke-width="1.5" fill="none"/></svg>
<div class="a" style="left:1630px;top:525px;width:56px;height:20px;background:#454545;border:1px solid #4b4b4b;box-sizing:border-box;border-radius:2px;"></div>
<div class="a" style="left:1630px;top:525px;width:37px;height:20px;background:#e2e2e2;"></div>
<div class="a" style="left:1635px;top:534px;width:27px;height:2px;background:#000;"></div>
<svg class="a" style="left:1672px;top:532px;" width="9" height="7" viewBox="0 0 9 7"><path d="M1 1.5 L4.5 5 L8 1.5" stroke="#e0e0e0" stroke-width="1.5" fill="none"/></svg>
<div class="t" style="left:0px;top:561px;color:#6c6c6c;font-size:12px;left:auto;right:189px;font-weight:500;">缩放 :</div>
<div class="a" style="left:1567px;top:555px;width:56px;height:20px;border:1px solid #5c5c5c;box-sizing:border-box;border-radius:2px;"></div>
<svg class="a" style="left:1570px;top:558px;" width="11" height="14" viewBox="0 0 11 14"><path d="M1.5 5 L5.5 1.5 L9.5 5 M1.5 9 L5.5 12.5 L9.5 9" stroke="#686868" stroke-width="1.4" fill="none"/></svg>
<div class="t" style="left:1585px;top:561px;color:#6e6e6e;font-size:10px;font-family:'Liberation Mono',monospace;letter-spacing:-0.3px;">100%</div>
<div class="a" style="left:1630px;top:555px;width:56px;height:20px;border:1px solid #5c5c5c;box-sizing:border-box;border-radius:2px;"></div>
<svg class="a" style="left:1633px;top:558px;" width="11" height="14" viewBox="0 0 11 14"><path d="M1.5 5 L5.5 1.5 L9.5 5 M1.5 9 L5.5 12.5 L9.5 9" stroke="#686868" stroke-width="1.4" fill="none"/></svg>
<div class="t" style="left:1648px;top:561px;color:#6e6e6e;font-size:10px;font-family:'Liberation Mono',monospace;letter-spacing:-0.3px;">100%</div>
<div class="t" style="left:0px;top:589px;color:#6c6c6c;font-size:12px;left:auto;right:189px;font-weight:500;">对齐 :</div>
<div class="a" style="left:1567px;top:584px;width:45px;height:20px;border:1px solid #5c5c5c;box-sizing:border-box;border-radius:2px;"></div>
<div class="a" style="left:1589px;top:584px;width:1px;height:20px;background:#5c5c5c;"></div>
<div class="a" style="left:1506px;top:611px;width:235px;height:1px;background:#484848;"></div>
<div class="t" style="left:0px;top:625px;color:#d6d6d6;font-size:12px;left:auto;right:189px;font-weight:500;">配置文件 :</div>
<div class="a" style="left:1567px;top:619px;width:106px;height:20px;background:#454545;border:1px solid #4b4b4b;box-sizing:border-box;border-radius:2px;"></div>
<div class="a" style="left:1567px;top:619px;width:87px;height:20px;background:#e2e2e2;"></div>
<div class="a" style="left:1572px;top:627px;width:48px;height:3px;background:#000;"></div>
<div class="t" style="left:1625px;top:623px;color:#111;font-size:12px;">等比</div>
<svg class="a" style="left:1659px;top:626px;" width="9" height="7" viewBox="0 0 9 7"><path d="M1 1.5 L4.5 5 L8 1.5" stroke="#e0e0e0" stroke-width="1.5" fill="none"/></svg>
<div class="a" style="left:1500px;top:645px;width:245px;height:4px;background:#3e3e3e;"></div>
<div class="a" style="left:1500px;top:649px;width:245px;height:241px;background:#535353;"></div>
<div class="a" style="left:1500px;top:649px;width:245px;height:26px;background:#424242;"></div>
<div class="a" style="left:1501px;top:649px;width:41px;height:26px;background:#4a4a4a;"></div>
<div class="t" style="left:1511px;top:658px;color:#a6a6a6;font-size:12px;">颜色</div>
<div class="a" style="left:1543px;top:649px;width:54px;height:26px;background:#4a4a4a;"></div>
<div class="t" style="left:1553px;top:658px;color:#a6a6a6;font-size:12px;">透明度</div>
<div class="a" style="left:1598px;top:649px;width:46px;height:26px;background:#535353;"></div>
<div class="t" style="left:1612px;top:658px;color:#f0f0f0;font-size:12px;">渐变</div>
<svg class="a" style="left:1603px;top:658px;" width="7" height="11" viewBox="0 0 7 11"><path d="M1 4 L3.5 1.2 L6 4 M1 7 L3.5 9.8 L6 7" stroke="#d0d0d0" stroke-width="1.1" fill="none"/></svg>
<svg class="a" style="left:1731px;top:659px;" width="11" height="8" viewBox="0 0 11 8"><path d="M0 0.5 H10.5 M0 2.5 H10.5 M0 4.5 H10.5 M0 6.5 H10.5" stroke="#c8c8c8" stroke-width="1"/></svg>
<div class="a" style="left:1507px;top:682px;width:31px;height:31px;background:linear-gradient(90deg,#f2f2f2,#3a3231);border:1px solid #d0d0d0;box-sizing:border-box;"></div>
<div class="t" style="left:0px;top:689px;color:#d6d6d6;font-size:12px;left:auto;right:164px;font-weight:500;">类型 :</div>
<div class="a" style="left:1593px;top:683px;width:146px;height:19px;background:#4b4b4b;border:1px solid #434343;box-sizing:border-box;border-radius:2px;"></div>
<svg class="a" style="left:1727px;top:689px;" width="9" height="7" viewBox="0 0 9 7"><path d="M1 1.5 L4.5 5 L8 1.5" stroke="#f0f0f0" stroke-width="1.5" fill="none"/></svg>
<div class="t" style="left:0px;top:715px;color:#6c6c6c;font-size:12px;left:auto;right:164px;font-weight:500;">描边 :</div>
<div class="a" style="left:1593px;top:710px;width:66px;height:18px;border:1px solid #5e5e5e;box-sizing:border-box;"></div>
<div class="a" style="left:1518px;top:730px;width:19px;height:19px;background:#000;border:1px solid #f0f0f0;box-sizing:border-box;"></div>
<div class="a" style="left:1522px;top:734px;width:11px;height:11px;background:#535353;border:1px solid #f0f0f0;box-sizing:border-box;"></div>
<div class="a" style="left:1507px;top:719px;width:19px;height:19px;background:#fff;border:1px solid #d8d8d8;box-sizing:border-box;"></div>
<div class="a" style="left:1593px;top:736px;width:66px;height:19px;border:1px solid #5c5c5c;box-sizing:border-box;border-radius:2px;"></div>
<svg class="a" style="left:1645px;top:743px;" width="9" height="7" viewBox="0 0 9 7"><path d="M1 1.5 L4.5 5 L8 1.5" stroke="#6a6a6a" stroke-width="1.5" fill="none"/></svg>
<div class="a" style="left:1593px;top:762px;width:66px;height:19px;border:1px solid #5c5c5c;box-sizing:border-box;border-radius:2px;"></div>
<svg class="a" style="left:1645px;top:769px;" width="9" height="7" viewBox="0 0 9 7"><path d="M1 1.5 L4.5 5 L8 1.5" stroke="#6a6a6a" stroke-width="1.5" fill="none"/></svg>
<div class="a" style="left:1512px;top:796px;width:198px;height:18px;background:linear-gradient(90deg,#fafafa,#b8b4b3 35%,#6a6260 70%,#2e2523);border:1px solid #6a6a6a;box-sizing:border-box;"></div>
<div class="t" style="left:0px;top:845px;color:#6c6c6c;font-size:12px;left:auto;right:162px;font-weight:500;">不透明度 :</div>
<div class="a" style="left:1593px;top:841px;width:66px;height:19px;border:1px solid #5c5c5c;box-sizing:border-box;border-radius:2px;"></div>
<svg class="a" style="left:1645px;top:848px;" width="9" height="7" viewBox="0 0 9 7"><path d="M1 1.5 L4.5 5 L8 1.5" stroke="#6a6a6a" stroke-width="1.5" fill="none"/></svg>
<div class="t" style="left:0px;top:871px;color:#6c6c6c;font-size:12px;left:auto;right:162px;font-weight:500;">位置 :</div>
<div class="a" style="left:1593px;top:867px;width:66px;height:19px;border:1px solid #5c5c5c;box-sizing:border-box;border-radius:2px;"></div>
<svg class="a" style="left:1645px;top:874px;" width="9" height="7" viewBox="0 0 9 7"><path d="M1 1.5 L4.5 5 L8 1.5" stroke="#6a6a6a" stroke-width="1.5" fill="none"/></svg>
<div class="a" style="left:1500px;top:890px;width:245px;height:2px;background:#3e3e3e;"></div>
<div class="a" style="left:1500px;top:892px;width:245px;height:30px;background:#424242;"></div>
<div class="a" style="left:1500px;top:895px;width:49px;height:27px;background:#535353;"></div>
<div class="t" style="left:1516px;top:904px;color:#f0f0f0;font-size:12px;">变换</div>
<svg class="a" style="left:1505px;top:904px;" width="7" height="11" viewBox="0 0 7 11"><path d="M1 4 L3.5 1.2 L6 4 M1 7 L3.5 9.8 L6 7" stroke="#d0d0d0" stroke-width="1.1" fill="none"/></svg>
<svg class="a" style="left:1730px;top:905px;" width="11" height="8" viewBox="0 0 11 8"><path d="M0 0.5 H10.5 M0 2.5 H10.5 M0 4.5 H10.5 M0 6.5 H10.5" stroke="#c8c8c8" stroke-width="1"/></svg>
<div class="a" style="left:1500px;top:922px;width:245px;height:1px;background:#565656;"></div>
<div class="a" style="left:1500px;top:923px;width:245px;height:2px;background:#3e3e3e;"></div>
<div class="a" style="left:1500px;top:925px;width:245px;height:28px;background:#424242;"></div>
<div class="a" style="left:1500px;top:925px;width:49px;height:28px;background:#535353;"></div>
<div class="t" style="left:1516px;top:934px;color:#f0f0f0;font-size:12px;">字符</div>
<svg class="a" style="left:1505px;top:934px;" width="7" height="11" viewBox="0 0 7 11"><path d="M1 4 L3.5 1.2 L6 4 M1 7 L3.5 9.8 L6 7" stroke="#d0d0d0" stroke-width="1.1" fill="none"/></svg>
<div class="a" style="left:1550px;top:925px;width:41px;height:28px;background:#4a4a4a;"></div>
<div class="t" style="left:1559px;top:934px;color:#a6a6a6;font-size:12px;">段落</div>
<div class="a" style="left:1592px;top:925px;width:78px;height:28px;background:#4a4a4a;"></div>
<div class="t" style="left:1602px;top:934px;color:#a6a6a6;font-size:12px;"><span style="letter-spacing:0.55px">OpenType</span></div>
<svg class="a" style="left:1730px;top:936px;" width="11" height="8" viewBox="0 0 11 8"><path d="M0 0.5 H10.5 M0 2.5 H10.5 M0 4.5 H10.5 M0 6.5 H10.5" stroke="#c8c8c8" stroke-width="1"/></svg>
<div class="a" style="left:1500px;top:953px;width:245px;height:2px;background:#3e3e3e;"></div>
<svg class="a" style="left:0;top:0" width="1751" height="959" viewBox="0 0 1751 959"><path d="M1575 366 H1584 V370 H1579 V374 H1584 V378 H1575 Z" fill="#cdcdcd"/><rect x="1572" y="370.5" width="3" height="3" fill="#383838" stroke="#cdcdcd" stroke-width="1"/><path d="M1599 366 H1606 V370 H1601 V374 H1606 V378 H1599 A6 6 0 0 1 1599 366 Z" fill="#cdcdcd"/><path d="M1617 366 H1628 V370 H1623 V374 H1628 V378 H1617 Z" fill="#cdcdcd"/><path d="M1572 393 H1584 V398 H1577 V405 H1572 Z" fill="#cdcdcd"/><path d="M1579 400.5 H1584 M1579 400.5 V405" stroke="#cdcdcd" stroke-width="1.3" fill="none"/><path d="M1600 393 H1606 V398 H1599 V405 H1594 V399 A6 6 0 0 1 1600 393 Z" fill="#cdcdcd"/><path d="M1601 400.5 H1606 M1601 400.5 V405" stroke="#cdcdcd" stroke-width="1.3" fill="none"/><path d="M1620 393 H1628 V398 H1621 V405 H1616 V397 Z" fill="#cdcdcd"/><path d="M1623 400.5 H1628 M1623 400.5 V405" stroke="#cdcdcd" stroke-width="1.3" fill="none"/><path d="M1572 420 H1577 V427 H1584 V432 H1572 Z" fill="#cdcdcd"/><path d="M1594 420 H1599 V427 H1606 V432 H1594 Z" fill="#6c6c6c"/><path d="M1616 420 H1621 V427 H1628 V432 H1616 Z" fill="#6c6c6c"/><rect x="1670.5" y="455.5" width="27" height="10" fill="none" stroke="#6c6c6c" stroke-width="1.4" stroke-dasharray="7 3"/><rect x="1708.5" y="455.5" width="27" height="10" fill="none" stroke="#6c6c6c" stroke-width="1.4" stroke-dasharray="5 4" stroke-dashoffset="2"/><path d="M1724 533 H1736 M1733 530 L1736.5 533 L1733 536 M1736 539.5 H1724 M1727 536.5 L1723.5 539.5 L1727 542.5" stroke="#7a7a7a" stroke-width="1.9" fill="none"/><path d="M1727 557 a3.5 3.5 0 0 1 7 0 v4 M1734 568 a3.5 3.5 0 0 1 -7 0 v-4 M1725 556 L1736 573" stroke="#707070" stroke-width="1.9" fill="none"/><path d="M1571 594 H1583 M1580 591 L1583.5 594 L1580 597 M1585.5 589 V599" stroke="#6c6c6c" stroke-width="1.3" fill="none"/><path d="M1593 594 H1606 M1602 591 L1605.5 594 L1602 597 M1601 589 V599" stroke="#6c6c6c" stroke-width="1.3" fill="none"/><path d="M1699 624 V634 L1703.5 629 Z M1711 624 V634 L1706.5 629 Z" fill="none" stroke="#6c6c6c" stroke-width="1"/><path d="M1705 622 V636" stroke="#6c6c6c" stroke-width="1" stroke-dasharray="1.5 1.5"/><path d="M1724 623 H1734 L1729 627.5 Z M1724 636 H1734 L1729 631.5 Z" fill="none" stroke="#6c6c6c" stroke-width="1"/><path d="M1722 629.5 H1736" stroke="#6c6c6c" stroke-width="1" stroke-dasharray="1.5 1.5"/><path d="M1541 696 H1546 L1543.5 699 Z" fill="#d0d0d0"/><path d="M1597 714 H1611 V719 H1603 V725 H1597 Z" fill="#686868"/><path d="M1619 714 H1633 V719 H1625 V725 H1619 Z" fill="#686868"/><path d="M1641 714 H1655 V719 H1647 V725 H1641 Z" fill="#686868"/><path d="M1508 737 L1525 720" stroke="#d8121c" stroke-width="1.6"/><path d="M1574 750 H1587 M1574 750 L1583 740 M1581 750 A7 7 0 0 0 1578.5 745" stroke="#8a8a8a" stroke-width="1.2" fill="none"/><ellipse cx="1583" cy="770" rx="6" ry="4" fill="none" stroke="#9a9a9a" stroke-width="1.2"/><path d="M1573.5 764 V777 M1572 765.5 L1573.5 763.5 L1575 765.5 M1572 775.5 L1573.5 777.5 L1575 775.5 M1577 778 H1589" stroke="#9a9a9a" stroke-width="1" fill="none"/><rect x="1514.5" y="760.5" width="6" height="4" fill="none" stroke="#6c6c6c" stroke-width="1"/><rect x="1522.5" y="769.5" width="6" height="4" fill="none" stroke="#6c6c6c" stroke-width="1"/><path d="M1523 762.5 H1529 M1526 760.5 L1529 762.5 L1526 764.5 M1520 771.5 H1514 M1517 769.5 L1514 771.5 L1517 773.5" stroke="#6c6c6c" stroke-width="1" fill="none"/><path d="M1723 802 H1735 M1727 802 V800 H1731 V802 M1724.5 802 L1725.2 812 H1732.8 L1733.5 802 M1727.5 804.5 V810 M1730.5 804.5 V810" stroke="#6c6c6c" stroke-width="1.1" fill="none"/></svg>
<!-- p_status -->
<svg class="a" style="left:1445px;top:101px;" width="10" height="7" viewBox="0 0 10 7"><path d="M1 5.5 L5 1.5 L9 5.5" stroke="#8c8c8c" stroke-width="1.6" fill="none"/></svg>
<svg class="a" style="left:1445px;top:927px;" width="10" height="7" viewBox="0 0 10 7"><path d="M1 1.5 L5 5.5 L9 1.5" stroke="#8c8c8c" stroke-width="1.6" fill="none"/></svg>
<div class="a" style="left:1443px;top:515px;width:14px;height:26px;background:#676767;border-radius:7px;"></div>
<div class="a" style="left:1441px;top:938px;width:18px;height:17px;background:#535353;"></div>
<div class="a" style="left:80px;top:939px;width:52px;height:16px;background:#454545;border-radius:2px;"></div>
<div class="t" style="left:85px;top:943px;color:#f0f0f0;font-size:10px;font-family:'Liberation Mono',monospace;letter-spacing:0px;">100%</div>
<svg class="a" style="left:136px;top:944px;" width="9" height="7" viewBox="0 0 9 7"><path d="M1 1.5 L4.5 5 L8 1.5" stroke="#e0e0e0" stroke-width="1.5" fill="none"/></svg>
<div class="a" style="left:151px;top:940px;width:1px;height:14px;background:#424242;"></div>
<svg class="a" style="left:157px;top:942px;" width="10" height="10" viewBox="0 0 10 10"><path d="M1 1 V9" stroke="#6e6e6e" stroke-width="1.5"/><path d="M9 1 V9 L3.5 5 Z" fill="#6e6e6e"/></svg>
<svg class="a" style="left:175px;top:942px;" width="7" height="10" viewBox="0 0 7 10"><path d="M6 1 V9 L0.5 5 Z" fill="#6e6e6e"/></svg>
<div class="a" style="left:190px;top:939px;width:43px;height:16px;background:#454545;border-radius:2px;"></div>
<div class="t" style="left:195px;top:943px;color:#f0f0f0;font-size:10px;font-family:'Liberation Mono',monospace;">1</div>
<svg class="a" style="left:236px;top:944px;" width="9" height="7" viewBox="0 0 9 7"><path d="M1 1.5 L4.5 5 L8 1.5" stroke="#e0e0e0" stroke-width="1.5" fill="none"/></svg>
<div class="a" style="left:251px;top:940px;width:1px;height:14px;background:#424242;"></div>
<svg class="a" style="left:259px;top:942px;" width="7" height="10" viewBox="0 0 7 10"><path d="M1 1 V9 L6.5 5 Z" fill="#6e6e6e"/></svg>
<svg class="a" style="left:274px;top:942px;" width="10" height="10" viewBox="0 0 10 10"><path d="M9 1 V9" stroke="#6e6e6e" stroke-width="1.5"/><path d="M1 1 V9 L6.5 5 Z" fill="#6e6e6e"/></svg>
<div class="a" style="left:291px;top:940px;width:1px;height:14px;background:#424242;"></div>
<div class="t" style="left:369px;top:943px;color:#b4b4b4;font-size:12px;">直接选择</div>
<svg class="a" style="left:498px;top:941px;" width="7" height="11" viewBox="0 0 7 11"><path d="M1 1 V10 L6 5.5 Z" fill="#d8d8d8"/></svg>
<div class="a" style="left:509px;top:938px;width:932px;height:17px;background:#4d4d4d;"></div>
<div class="a" style="left:509px;top:938px;width:1px;height:17px;background:#424242;"></div>
<svg class="a" style="left:514px;top:942px;" width="8" height="10" viewBox="0 0 8 10"><path d="M6 1 L2 5 L6 9" stroke="#a0a0a0" stroke-width="1.5" fill="none"/></svg>
<svg class="a" style="left:1429px;top:942px;" width="8" height="10" viewBox="0 0 8 10"><path d="M2 1 L6 5 L2 9" stroke="#a0a0a0" stroke-width="1.5" fill="none"/></svg>
<div class="a" style="left:956px;top:939px;width:25px;height:15px;background:#676767;border-radius:8px;"></div>
<!-- p_wm -->
<svg class="a" style="left:0;top:0" width="1751" height="959" viewBox="0 0 1751 959"><g transform="translate(0.5,1.6)"><path d="M1499 888 L1496.5 894 L1505 889.5 Z" fill="#ececec"/><ellipse cx="1513.7" cy="870.5" rx="24.5" ry="21" fill="#ececec"/><circle cx="1503.6" cy="864" r="2.9" fill="#3a3a3a"/><circle cx="1523.3" cy="864" r="2.9" fill="#3a3a3a"/><ellipse cx="1536" cy="886" rx="22.3" ry="18.4" fill="#3a3a3a"/><path d="M1545 900 L1551 905.5 L1549 897 Z" fill="#ececec"/><ellipse cx="1536" cy="886" rx="20.5" ry="16.6" fill="#ececec"/><circle cx="1528.6" cy="881.5" r="2.4" fill="#3a3a3a"/><circle cx="1543.6" cy="881.5" r="2.4" fill="#3a3a3a"/></g></svg>
<div class="t" style="left:1564px;top:860px;color:#ffffff;font-size:43px;font-weight:400;letter-spacing:-0.5px;">野鹿志</div>
</div></body></html>
